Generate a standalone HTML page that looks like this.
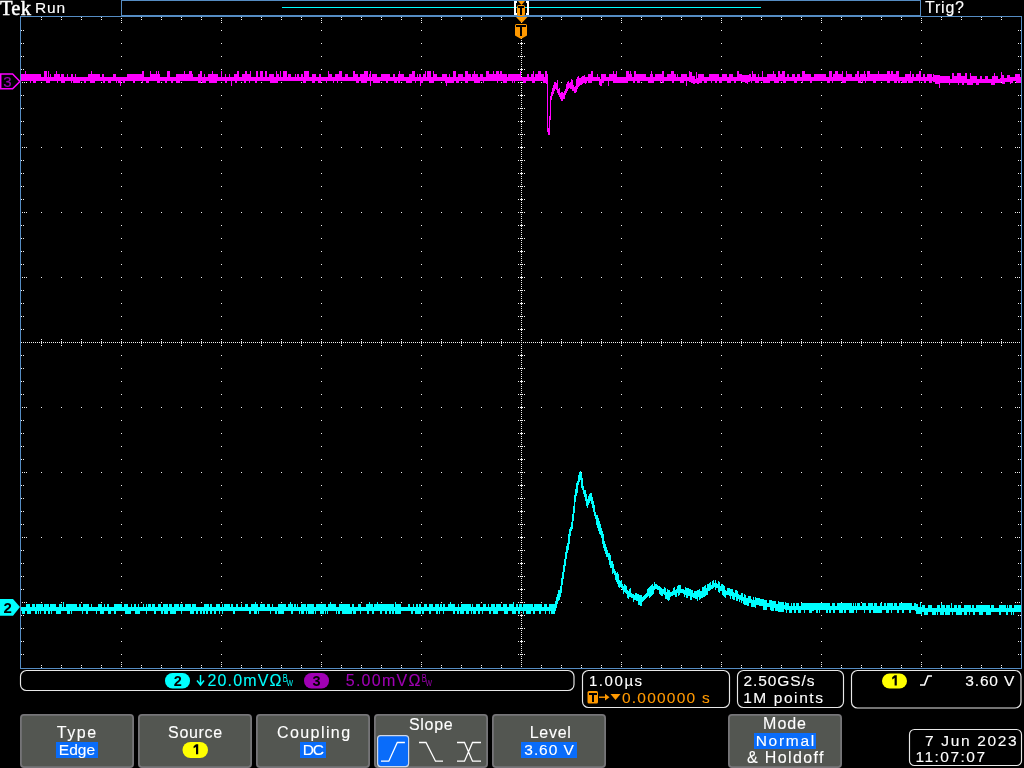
<!DOCTYPE html>
<html><head><meta charset="utf-8"><title>Tek scope</title>
<style>
html,body{margin:0;padding:0;background:#000;width:1024px;height:768px;overflow:hidden}
svg{position:absolute;left:0;top:0;display:block;will-change:transform}
text{font-family:"Liberation Sans",sans-serif}
</style></head><body>
<svg width="1024" height="768" viewBox="0 0 1024 768" shape-rendering="crispEdges">
<rect width="1024" height="768" fill="#000"/>
<path d="M121 0h800v1h-800zM121 15h800v1h-800zM121 0h1v16h-1zM920 0h1v16h-1z" fill="#558cc3"/>
<path d="M282 7h479v1h-479z" fill="#00ffff"/>
<path d="M20 16h1002v1h-1002zM20 668h1002v1h-1002zM20 16h1v653h-1zM1021 16h1v653h-1z" fill="#558cc3"/>
<path d="M121 30h1v1h-1zM121 43h1v1h-1zM121 56h1v1h-1zM121 69h1v1h-1zM121 82h1v1h-1zM121 95h1v1h-1zM121 108h1v1h-1zM121 121h1v1h-1zM121 134h1v1h-1zM121 147h1v1h-1zM121 160h1v1h-1zM121 173h1v1h-1zM121 186h1v1h-1zM121 199h1v1h-1zM121 212h1v1h-1zM121 225h1v1h-1zM121 238h1v1h-1zM121 251h1v1h-1zM121 264h1v1h-1zM121 277h1v1h-1zM121 290h1v1h-1zM121 303h1v1h-1zM121 316h1v1h-1zM121 329h1v1h-1zM121 342h1v1h-1zM121 355h1v1h-1zM121 368h1v1h-1zM121 381h1v1h-1zM121 394h1v1h-1zM121 407h1v1h-1zM121 420h1v1h-1zM121 433h1v1h-1zM121 446h1v1h-1zM121 459h1v1h-1zM121 472h1v1h-1zM121 485h1v1h-1zM121 498h1v1h-1zM121 511h1v1h-1zM121 524h1v1h-1zM121 537h1v1h-1zM121 550h1v1h-1zM121 563h1v1h-1zM121 576h1v1h-1zM121 589h1v1h-1zM121 602h1v1h-1zM121 615h1v1h-1zM121 628h1v1h-1zM121 641h1v1h-1zM121 654h1v1h-1zM221 30h1v1h-1zM221 43h1v1h-1zM221 56h1v1h-1zM221 69h1v1h-1zM221 82h1v1h-1zM221 95h1v1h-1zM221 108h1v1h-1zM221 121h1v1h-1zM221 134h1v1h-1zM221 147h1v1h-1zM221 160h1v1h-1zM221 173h1v1h-1zM221 186h1v1h-1zM221 199h1v1h-1zM221 212h1v1h-1zM221 225h1v1h-1zM221 238h1v1h-1zM221 251h1v1h-1zM221 264h1v1h-1zM221 277h1v1h-1zM221 290h1v1h-1zM221 303h1v1h-1zM221 316h1v1h-1zM221 329h1v1h-1zM221 342h1v1h-1zM221 355h1v1h-1zM221 368h1v1h-1zM221 381h1v1h-1zM221 394h1v1h-1zM221 407h1v1h-1zM221 420h1v1h-1zM221 433h1v1h-1zM221 446h1v1h-1zM221 459h1v1h-1zM221 472h1v1h-1zM221 485h1v1h-1zM221 498h1v1h-1zM221 511h1v1h-1zM221 524h1v1h-1zM221 537h1v1h-1zM221 550h1v1h-1zM221 563h1v1h-1zM221 576h1v1h-1zM221 589h1v1h-1zM221 602h1v1h-1zM221 615h1v1h-1zM221 628h1v1h-1zM221 641h1v1h-1zM221 654h1v1h-1zM321 30h1v1h-1zM321 43h1v1h-1zM321 56h1v1h-1zM321 69h1v1h-1zM321 82h1v1h-1zM321 95h1v1h-1zM321 108h1v1h-1zM321 121h1v1h-1zM321 134h1v1h-1zM321 147h1v1h-1zM321 160h1v1h-1zM321 173h1v1h-1zM321 186h1v1h-1zM321 199h1v1h-1zM321 212h1v1h-1zM321 225h1v1h-1zM321 238h1v1h-1zM321 251h1v1h-1zM321 264h1v1h-1zM321 277h1v1h-1zM321 290h1v1h-1zM321 303h1v1h-1zM321 316h1v1h-1zM321 329h1v1h-1zM321 342h1v1h-1zM321 355h1v1h-1zM321 368h1v1h-1zM321 381h1v1h-1zM321 394h1v1h-1zM321 407h1v1h-1zM321 420h1v1h-1zM321 433h1v1h-1zM321 446h1v1h-1zM321 459h1v1h-1zM321 472h1v1h-1zM321 485h1v1h-1zM321 498h1v1h-1zM321 511h1v1h-1zM321 524h1v1h-1zM321 537h1v1h-1zM321 550h1v1h-1zM321 563h1v1h-1zM321 576h1v1h-1zM321 589h1v1h-1zM321 602h1v1h-1zM321 615h1v1h-1zM321 628h1v1h-1zM321 641h1v1h-1zM321 654h1v1h-1zM421 30h1v1h-1zM421 43h1v1h-1zM421 56h1v1h-1zM421 69h1v1h-1zM421 82h1v1h-1zM421 95h1v1h-1zM421 108h1v1h-1zM421 121h1v1h-1zM421 134h1v1h-1zM421 147h1v1h-1zM421 160h1v1h-1zM421 173h1v1h-1zM421 186h1v1h-1zM421 199h1v1h-1zM421 212h1v1h-1zM421 225h1v1h-1zM421 238h1v1h-1zM421 251h1v1h-1zM421 264h1v1h-1zM421 277h1v1h-1zM421 290h1v1h-1zM421 303h1v1h-1zM421 316h1v1h-1zM421 329h1v1h-1zM421 342h1v1h-1zM421 355h1v1h-1zM421 368h1v1h-1zM421 381h1v1h-1zM421 394h1v1h-1zM421 407h1v1h-1zM421 420h1v1h-1zM421 433h1v1h-1zM421 446h1v1h-1zM421 459h1v1h-1zM421 472h1v1h-1zM421 485h1v1h-1zM421 498h1v1h-1zM421 511h1v1h-1zM421 524h1v1h-1zM421 537h1v1h-1zM421 550h1v1h-1zM421 563h1v1h-1zM421 576h1v1h-1zM421 589h1v1h-1zM421 602h1v1h-1zM421 615h1v1h-1zM421 628h1v1h-1zM421 641h1v1h-1zM421 654h1v1h-1zM621 30h1v1h-1zM621 43h1v1h-1zM621 56h1v1h-1zM621 69h1v1h-1zM621 82h1v1h-1zM621 95h1v1h-1zM621 108h1v1h-1zM621 121h1v1h-1zM621 134h1v1h-1zM621 147h1v1h-1zM621 160h1v1h-1zM621 173h1v1h-1zM621 186h1v1h-1zM621 199h1v1h-1zM621 212h1v1h-1zM621 225h1v1h-1zM621 238h1v1h-1zM621 251h1v1h-1zM621 264h1v1h-1zM621 277h1v1h-1zM621 290h1v1h-1zM621 303h1v1h-1zM621 316h1v1h-1zM621 329h1v1h-1zM621 342h1v1h-1zM621 355h1v1h-1zM621 368h1v1h-1zM621 381h1v1h-1zM621 394h1v1h-1zM621 407h1v1h-1zM621 420h1v1h-1zM621 433h1v1h-1zM621 446h1v1h-1zM621 459h1v1h-1zM621 472h1v1h-1zM621 485h1v1h-1zM621 498h1v1h-1zM621 511h1v1h-1zM621 524h1v1h-1zM621 537h1v1h-1zM621 550h1v1h-1zM621 563h1v1h-1zM621 576h1v1h-1zM621 589h1v1h-1zM621 602h1v1h-1zM621 615h1v1h-1zM621 628h1v1h-1zM621 641h1v1h-1zM621 654h1v1h-1zM721 30h1v1h-1zM721 43h1v1h-1zM721 56h1v1h-1zM721 69h1v1h-1zM721 82h1v1h-1zM721 95h1v1h-1zM721 108h1v1h-1zM721 121h1v1h-1zM721 134h1v1h-1zM721 147h1v1h-1zM721 160h1v1h-1zM721 173h1v1h-1zM721 186h1v1h-1zM721 199h1v1h-1zM721 212h1v1h-1zM721 225h1v1h-1zM721 238h1v1h-1zM721 251h1v1h-1zM721 264h1v1h-1zM721 277h1v1h-1zM721 290h1v1h-1zM721 303h1v1h-1zM721 316h1v1h-1zM721 329h1v1h-1zM721 342h1v1h-1zM721 355h1v1h-1zM721 368h1v1h-1zM721 381h1v1h-1zM721 394h1v1h-1zM721 407h1v1h-1zM721 420h1v1h-1zM721 433h1v1h-1zM721 446h1v1h-1zM721 459h1v1h-1zM721 472h1v1h-1zM721 485h1v1h-1zM721 498h1v1h-1zM721 511h1v1h-1zM721 524h1v1h-1zM721 537h1v1h-1zM721 550h1v1h-1zM721 563h1v1h-1zM721 576h1v1h-1zM721 589h1v1h-1zM721 602h1v1h-1zM721 615h1v1h-1zM721 628h1v1h-1zM721 641h1v1h-1zM721 654h1v1h-1zM821 30h1v1h-1zM821 43h1v1h-1zM821 56h1v1h-1zM821 69h1v1h-1zM821 82h1v1h-1zM821 95h1v1h-1zM821 108h1v1h-1zM821 121h1v1h-1zM821 134h1v1h-1zM821 147h1v1h-1zM821 160h1v1h-1zM821 173h1v1h-1zM821 186h1v1h-1zM821 199h1v1h-1zM821 212h1v1h-1zM821 225h1v1h-1zM821 238h1v1h-1zM821 251h1v1h-1zM821 264h1v1h-1zM821 277h1v1h-1zM821 290h1v1h-1zM821 303h1v1h-1zM821 316h1v1h-1zM821 329h1v1h-1zM821 342h1v1h-1zM821 355h1v1h-1zM821 368h1v1h-1zM821 381h1v1h-1zM821 394h1v1h-1zM821 407h1v1h-1zM821 420h1v1h-1zM821 433h1v1h-1zM821 446h1v1h-1zM821 459h1v1h-1zM821 472h1v1h-1zM821 485h1v1h-1zM821 498h1v1h-1zM821 511h1v1h-1zM821 524h1v1h-1zM821 537h1v1h-1zM821 550h1v1h-1zM821 563h1v1h-1zM821 576h1v1h-1zM821 589h1v1h-1zM821 602h1v1h-1zM821 615h1v1h-1zM821 628h1v1h-1zM821 641h1v1h-1zM821 654h1v1h-1zM921 30h1v1h-1zM921 43h1v1h-1zM921 56h1v1h-1zM921 69h1v1h-1zM921 82h1v1h-1zM921 95h1v1h-1zM921 108h1v1h-1zM921 121h1v1h-1zM921 134h1v1h-1zM921 147h1v1h-1zM921 160h1v1h-1zM921 173h1v1h-1zM921 186h1v1h-1zM921 199h1v1h-1zM921 212h1v1h-1zM921 225h1v1h-1zM921 238h1v1h-1zM921 251h1v1h-1zM921 264h1v1h-1zM921 277h1v1h-1zM921 290h1v1h-1zM921 303h1v1h-1zM921 316h1v1h-1zM921 329h1v1h-1zM921 342h1v1h-1zM921 355h1v1h-1zM921 368h1v1h-1zM921 381h1v1h-1zM921 394h1v1h-1zM921 407h1v1h-1zM921 420h1v1h-1zM921 433h1v1h-1zM921 446h1v1h-1zM921 459h1v1h-1zM921 472h1v1h-1zM921 485h1v1h-1zM921 498h1v1h-1zM921 511h1v1h-1zM921 524h1v1h-1zM921 537h1v1h-1zM921 550h1v1h-1zM921 563h1v1h-1zM921 576h1v1h-1zM921 589h1v1h-1zM921 602h1v1h-1zM921 615h1v1h-1zM921 628h1v1h-1zM921 641h1v1h-1zM921 654h1v1h-1zM41 82h1v1h-1zM61 82h1v1h-1zM81 82h1v1h-1zM101 82h1v1h-1zM121 82h1v1h-1zM141 82h1v1h-1zM161 82h1v1h-1zM181 82h1v1h-1zM201 82h1v1h-1zM221 82h1v1h-1zM241 82h1v1h-1zM261 82h1v1h-1zM281 82h1v1h-1zM301 82h1v1h-1zM321 82h1v1h-1zM341 82h1v1h-1zM361 82h1v1h-1zM381 82h1v1h-1zM401 82h1v1h-1zM421 82h1v1h-1zM441 82h1v1h-1zM461 82h1v1h-1zM481 82h1v1h-1zM501 82h1v1h-1zM521 82h1v1h-1zM541 82h1v1h-1zM561 82h1v1h-1zM581 82h1v1h-1zM601 82h1v1h-1zM621 82h1v1h-1zM641 82h1v1h-1zM661 82h1v1h-1zM681 82h1v1h-1zM701 82h1v1h-1zM721 82h1v1h-1zM741 82h1v1h-1zM761 82h1v1h-1zM781 82h1v1h-1zM801 82h1v1h-1zM821 82h1v1h-1zM841 82h1v1h-1zM861 82h1v1h-1zM881 82h1v1h-1zM901 82h1v1h-1zM921 82h1v1h-1zM941 82h1v1h-1zM961 82h1v1h-1zM981 82h1v1h-1zM1001 82h1v1h-1zM41 147h1v1h-1zM61 147h1v1h-1zM81 147h1v1h-1zM101 147h1v1h-1zM121 147h1v1h-1zM141 147h1v1h-1zM161 147h1v1h-1zM181 147h1v1h-1zM201 147h1v1h-1zM221 147h1v1h-1zM241 147h1v1h-1zM261 147h1v1h-1zM281 147h1v1h-1zM301 147h1v1h-1zM321 147h1v1h-1zM341 147h1v1h-1zM361 147h1v1h-1zM381 147h1v1h-1zM401 147h1v1h-1zM421 147h1v1h-1zM441 147h1v1h-1zM461 147h1v1h-1zM481 147h1v1h-1zM501 147h1v1h-1zM521 147h1v1h-1zM541 147h1v1h-1zM561 147h1v1h-1zM581 147h1v1h-1zM601 147h1v1h-1zM621 147h1v1h-1zM641 147h1v1h-1zM661 147h1v1h-1zM681 147h1v1h-1zM701 147h1v1h-1zM721 147h1v1h-1zM741 147h1v1h-1zM761 147h1v1h-1zM781 147h1v1h-1zM801 147h1v1h-1zM821 147h1v1h-1zM841 147h1v1h-1zM861 147h1v1h-1zM881 147h1v1h-1zM901 147h1v1h-1zM921 147h1v1h-1zM941 147h1v1h-1zM961 147h1v1h-1zM981 147h1v1h-1zM1001 147h1v1h-1zM41 212h1v1h-1zM61 212h1v1h-1zM81 212h1v1h-1zM101 212h1v1h-1zM121 212h1v1h-1zM141 212h1v1h-1zM161 212h1v1h-1zM181 212h1v1h-1zM201 212h1v1h-1zM221 212h1v1h-1zM241 212h1v1h-1zM261 212h1v1h-1zM281 212h1v1h-1zM301 212h1v1h-1zM321 212h1v1h-1zM341 212h1v1h-1zM361 212h1v1h-1zM381 212h1v1h-1zM401 212h1v1h-1zM421 212h1v1h-1zM441 212h1v1h-1zM461 212h1v1h-1zM481 212h1v1h-1zM501 212h1v1h-1zM521 212h1v1h-1zM541 212h1v1h-1zM561 212h1v1h-1zM581 212h1v1h-1zM601 212h1v1h-1zM621 212h1v1h-1zM641 212h1v1h-1zM661 212h1v1h-1zM681 212h1v1h-1zM701 212h1v1h-1zM721 212h1v1h-1zM741 212h1v1h-1zM761 212h1v1h-1zM781 212h1v1h-1zM801 212h1v1h-1zM821 212h1v1h-1zM841 212h1v1h-1zM861 212h1v1h-1zM881 212h1v1h-1zM901 212h1v1h-1zM921 212h1v1h-1zM941 212h1v1h-1zM961 212h1v1h-1zM981 212h1v1h-1zM1001 212h1v1h-1zM41 277h1v1h-1zM61 277h1v1h-1zM81 277h1v1h-1zM101 277h1v1h-1zM121 277h1v1h-1zM141 277h1v1h-1zM161 277h1v1h-1zM181 277h1v1h-1zM201 277h1v1h-1zM221 277h1v1h-1zM241 277h1v1h-1zM261 277h1v1h-1zM281 277h1v1h-1zM301 277h1v1h-1zM321 277h1v1h-1zM341 277h1v1h-1zM361 277h1v1h-1zM381 277h1v1h-1zM401 277h1v1h-1zM421 277h1v1h-1zM441 277h1v1h-1zM461 277h1v1h-1zM481 277h1v1h-1zM501 277h1v1h-1zM521 277h1v1h-1zM541 277h1v1h-1zM561 277h1v1h-1zM581 277h1v1h-1zM601 277h1v1h-1zM621 277h1v1h-1zM641 277h1v1h-1zM661 277h1v1h-1zM681 277h1v1h-1zM701 277h1v1h-1zM721 277h1v1h-1zM741 277h1v1h-1zM761 277h1v1h-1zM781 277h1v1h-1zM801 277h1v1h-1zM821 277h1v1h-1zM841 277h1v1h-1zM861 277h1v1h-1zM881 277h1v1h-1zM901 277h1v1h-1zM921 277h1v1h-1zM941 277h1v1h-1zM961 277h1v1h-1zM981 277h1v1h-1zM1001 277h1v1h-1zM41 407h1v1h-1zM61 407h1v1h-1zM81 407h1v1h-1zM101 407h1v1h-1zM121 407h1v1h-1zM141 407h1v1h-1zM161 407h1v1h-1zM181 407h1v1h-1zM201 407h1v1h-1zM221 407h1v1h-1zM241 407h1v1h-1zM261 407h1v1h-1zM281 407h1v1h-1zM301 407h1v1h-1zM321 407h1v1h-1zM341 407h1v1h-1zM361 407h1v1h-1zM381 407h1v1h-1zM401 407h1v1h-1zM421 407h1v1h-1zM441 407h1v1h-1zM461 407h1v1h-1zM481 407h1v1h-1zM501 407h1v1h-1zM521 407h1v1h-1zM541 407h1v1h-1zM561 407h1v1h-1zM581 407h1v1h-1zM601 407h1v1h-1zM621 407h1v1h-1zM641 407h1v1h-1zM661 407h1v1h-1zM681 407h1v1h-1zM701 407h1v1h-1zM721 407h1v1h-1zM741 407h1v1h-1zM761 407h1v1h-1zM781 407h1v1h-1zM801 407h1v1h-1zM821 407h1v1h-1zM841 407h1v1h-1zM861 407h1v1h-1zM881 407h1v1h-1zM901 407h1v1h-1zM921 407h1v1h-1zM941 407h1v1h-1zM961 407h1v1h-1zM981 407h1v1h-1zM1001 407h1v1h-1zM41 472h1v1h-1zM61 472h1v1h-1zM81 472h1v1h-1zM101 472h1v1h-1zM121 472h1v1h-1zM141 472h1v1h-1zM161 472h1v1h-1zM181 472h1v1h-1zM201 472h1v1h-1zM221 472h1v1h-1zM241 472h1v1h-1zM261 472h1v1h-1zM281 472h1v1h-1zM301 472h1v1h-1zM321 472h1v1h-1zM341 472h1v1h-1zM361 472h1v1h-1zM381 472h1v1h-1zM401 472h1v1h-1zM421 472h1v1h-1zM441 472h1v1h-1zM461 472h1v1h-1zM481 472h1v1h-1zM501 472h1v1h-1zM521 472h1v1h-1zM541 472h1v1h-1zM561 472h1v1h-1zM581 472h1v1h-1zM601 472h1v1h-1zM621 472h1v1h-1zM641 472h1v1h-1zM661 472h1v1h-1zM681 472h1v1h-1zM701 472h1v1h-1zM721 472h1v1h-1zM741 472h1v1h-1zM761 472h1v1h-1zM781 472h1v1h-1zM801 472h1v1h-1zM821 472h1v1h-1zM841 472h1v1h-1zM861 472h1v1h-1zM881 472h1v1h-1zM901 472h1v1h-1zM921 472h1v1h-1zM941 472h1v1h-1zM961 472h1v1h-1zM981 472h1v1h-1zM1001 472h1v1h-1zM41 537h1v1h-1zM61 537h1v1h-1zM81 537h1v1h-1zM101 537h1v1h-1zM121 537h1v1h-1zM141 537h1v1h-1zM161 537h1v1h-1zM181 537h1v1h-1zM201 537h1v1h-1zM221 537h1v1h-1zM241 537h1v1h-1zM261 537h1v1h-1zM281 537h1v1h-1zM301 537h1v1h-1zM321 537h1v1h-1zM341 537h1v1h-1zM361 537h1v1h-1zM381 537h1v1h-1zM401 537h1v1h-1zM421 537h1v1h-1zM441 537h1v1h-1zM461 537h1v1h-1zM481 537h1v1h-1zM501 537h1v1h-1zM521 537h1v1h-1zM541 537h1v1h-1zM561 537h1v1h-1zM581 537h1v1h-1zM601 537h1v1h-1zM621 537h1v1h-1zM641 537h1v1h-1zM661 537h1v1h-1zM681 537h1v1h-1zM701 537h1v1h-1zM721 537h1v1h-1zM741 537h1v1h-1zM761 537h1v1h-1zM781 537h1v1h-1zM801 537h1v1h-1zM821 537h1v1h-1zM841 537h1v1h-1zM861 537h1v1h-1zM881 537h1v1h-1zM901 537h1v1h-1zM921 537h1v1h-1zM941 537h1v1h-1zM961 537h1v1h-1zM981 537h1v1h-1zM1001 537h1v1h-1zM41 602h1v1h-1zM61 602h1v1h-1zM81 602h1v1h-1zM101 602h1v1h-1zM121 602h1v1h-1zM141 602h1v1h-1zM161 602h1v1h-1zM181 602h1v1h-1zM201 602h1v1h-1zM221 602h1v1h-1zM241 602h1v1h-1zM261 602h1v1h-1zM281 602h1v1h-1zM301 602h1v1h-1zM321 602h1v1h-1zM341 602h1v1h-1zM361 602h1v1h-1zM381 602h1v1h-1zM401 602h1v1h-1zM421 602h1v1h-1zM441 602h1v1h-1zM461 602h1v1h-1zM481 602h1v1h-1zM501 602h1v1h-1zM521 602h1v1h-1zM541 602h1v1h-1zM561 602h1v1h-1zM581 602h1v1h-1zM601 602h1v1h-1zM621 602h1v1h-1zM641 602h1v1h-1zM661 602h1v1h-1zM681 602h1v1h-1zM701 602h1v1h-1zM721 602h1v1h-1zM741 602h1v1h-1zM761 602h1v1h-1zM781 602h1v1h-1zM801 602h1v1h-1zM821 602h1v1h-1zM841 602h1v1h-1zM861 602h1v1h-1zM881 602h1v1h-1zM901 602h1v1h-1zM921 602h1v1h-1zM941 602h1v1h-1zM961 602h1v1h-1zM981 602h1v1h-1zM1001 602h1v1h-1zM521 18h1v1h-1zM521 20h1v1h-1zM521 22h1v1h-1zM521 24h1v1h-1zM521 26h1v1h-1zM521 28h1v1h-1zM521 30h1v1h-1zM521 32h1v1h-1zM521 34h1v1h-1zM521 36h1v1h-1zM521 38h1v1h-1zM521 40h1v1h-1zM521 42h1v1h-1zM521 44h1v1h-1zM521 46h1v1h-1zM521 48h1v1h-1zM521 50h1v1h-1zM521 52h1v1h-1zM521 54h1v1h-1zM521 56h1v1h-1zM521 58h1v1h-1zM521 60h1v1h-1zM521 62h1v1h-1zM521 64h1v1h-1zM521 66h1v1h-1zM521 68h1v1h-1zM521 70h1v1h-1zM521 72h1v1h-1zM521 74h1v1h-1zM521 76h1v1h-1zM521 78h1v1h-1zM521 80h1v1h-1zM521 82h1v1h-1zM521 84h1v1h-1zM521 86h1v1h-1zM521 88h1v1h-1zM521 90h1v1h-1zM521 92h1v1h-1zM521 94h1v1h-1zM521 96h1v1h-1zM521 98h1v1h-1zM521 100h1v1h-1zM521 102h1v1h-1zM521 104h1v1h-1zM521 106h1v1h-1zM521 108h1v1h-1zM521 110h1v1h-1zM521 112h1v1h-1zM521 114h1v1h-1zM521 116h1v1h-1zM521 118h1v1h-1zM521 120h1v1h-1zM521 122h1v1h-1zM521 124h1v1h-1zM521 126h1v1h-1zM521 128h1v1h-1zM521 130h1v1h-1zM521 132h1v1h-1zM521 134h1v1h-1zM521 136h1v1h-1zM521 138h1v1h-1zM521 140h1v1h-1zM521 142h1v1h-1zM521 144h1v1h-1zM521 146h1v1h-1zM521 148h1v1h-1zM521 150h1v1h-1zM521 152h1v1h-1zM521 154h1v1h-1zM521 156h1v1h-1zM521 158h1v1h-1zM521 160h1v1h-1zM521 162h1v1h-1zM521 164h1v1h-1zM521 166h1v1h-1zM521 168h1v1h-1zM521 170h1v1h-1zM521 172h1v1h-1zM521 174h1v1h-1zM521 176h1v1h-1zM521 178h1v1h-1zM521 180h1v1h-1zM521 182h1v1h-1zM521 184h1v1h-1zM521 186h1v1h-1zM521 188h1v1h-1zM521 190h1v1h-1zM521 192h1v1h-1zM521 194h1v1h-1zM521 196h1v1h-1zM521 198h1v1h-1zM521 200h1v1h-1zM521 202h1v1h-1zM521 204h1v1h-1zM521 206h1v1h-1zM521 208h1v1h-1zM521 210h1v1h-1zM521 212h1v1h-1zM521 214h1v1h-1zM521 216h1v1h-1zM521 218h1v1h-1zM521 220h1v1h-1zM521 222h1v1h-1zM521 224h1v1h-1zM521 226h1v1h-1zM521 228h1v1h-1zM521 230h1v1h-1zM521 232h1v1h-1zM521 234h1v1h-1zM521 236h1v1h-1zM521 238h1v1h-1zM521 240h1v1h-1zM521 242h1v1h-1zM521 244h1v1h-1zM521 246h1v1h-1zM521 248h1v1h-1zM521 250h1v1h-1zM521 252h1v1h-1zM521 254h1v1h-1zM521 256h1v1h-1zM521 258h1v1h-1zM521 260h1v1h-1zM521 262h1v1h-1zM521 264h1v1h-1zM521 266h1v1h-1zM521 268h1v1h-1zM521 270h1v1h-1zM521 272h1v1h-1zM521 274h1v1h-1zM521 276h1v1h-1zM521 278h1v1h-1zM521 280h1v1h-1zM521 282h1v1h-1zM521 284h1v1h-1zM521 286h1v1h-1zM521 288h1v1h-1zM521 290h1v1h-1zM521 292h1v1h-1zM521 294h1v1h-1zM521 296h1v1h-1zM521 298h1v1h-1zM521 300h1v1h-1zM521 302h1v1h-1zM521 304h1v1h-1zM521 306h1v1h-1zM521 308h1v1h-1zM521 310h1v1h-1zM521 312h1v1h-1zM521 314h1v1h-1zM521 316h1v1h-1zM521 318h1v1h-1zM521 320h1v1h-1zM521 322h1v1h-1zM521 324h1v1h-1zM521 326h1v1h-1zM521 328h1v1h-1zM521 330h1v1h-1zM521 332h1v1h-1zM521 334h1v1h-1zM521 336h1v1h-1zM521 338h1v1h-1zM521 340h1v1h-1zM521 342h1v1h-1zM521 344h1v1h-1zM521 346h1v1h-1zM521 348h1v1h-1zM521 350h1v1h-1zM521 352h1v1h-1zM521 354h1v1h-1zM521 356h1v1h-1zM521 358h1v1h-1zM521 360h1v1h-1zM521 362h1v1h-1zM521 364h1v1h-1zM521 366h1v1h-1zM521 368h1v1h-1zM521 370h1v1h-1zM521 372h1v1h-1zM521 374h1v1h-1zM521 376h1v1h-1zM521 378h1v1h-1zM521 380h1v1h-1zM521 382h1v1h-1zM521 384h1v1h-1zM521 386h1v1h-1zM521 388h1v1h-1zM521 390h1v1h-1zM521 392h1v1h-1zM521 394h1v1h-1zM521 396h1v1h-1zM521 398h1v1h-1zM521 400h1v1h-1zM521 402h1v1h-1zM521 404h1v1h-1zM521 406h1v1h-1zM521 408h1v1h-1zM521 410h1v1h-1zM521 412h1v1h-1zM521 414h1v1h-1zM521 416h1v1h-1zM521 418h1v1h-1zM521 420h1v1h-1zM521 422h1v1h-1zM521 424h1v1h-1zM521 426h1v1h-1zM521 428h1v1h-1zM521 430h1v1h-1zM521 432h1v1h-1zM521 434h1v1h-1zM521 436h1v1h-1zM521 438h1v1h-1zM521 440h1v1h-1zM521 442h1v1h-1zM521 444h1v1h-1zM521 446h1v1h-1zM521 448h1v1h-1zM521 450h1v1h-1zM521 452h1v1h-1zM521 454h1v1h-1zM521 456h1v1h-1zM521 458h1v1h-1zM521 460h1v1h-1zM521 462h1v1h-1zM521 464h1v1h-1zM521 466h1v1h-1zM521 468h1v1h-1zM521 470h1v1h-1zM521 472h1v1h-1zM521 474h1v1h-1zM521 476h1v1h-1zM521 478h1v1h-1zM521 480h1v1h-1zM521 482h1v1h-1zM521 484h1v1h-1zM521 486h1v1h-1zM521 488h1v1h-1zM521 490h1v1h-1zM521 492h1v1h-1zM521 494h1v1h-1zM521 496h1v1h-1zM521 498h1v1h-1zM521 500h1v1h-1zM521 502h1v1h-1zM521 504h1v1h-1zM521 506h1v1h-1zM521 508h1v1h-1zM521 510h1v1h-1zM521 512h1v1h-1zM521 514h1v1h-1zM521 516h1v1h-1zM521 518h1v1h-1zM521 520h1v1h-1zM521 522h1v1h-1zM521 524h1v1h-1zM521 526h1v1h-1zM521 528h1v1h-1zM521 530h1v1h-1zM521 532h1v1h-1zM521 534h1v1h-1zM521 536h1v1h-1zM521 538h1v1h-1zM521 540h1v1h-1zM521 542h1v1h-1zM521 544h1v1h-1zM521 546h1v1h-1zM521 548h1v1h-1zM521 550h1v1h-1zM521 552h1v1h-1zM521 554h1v1h-1zM521 556h1v1h-1zM521 558h1v1h-1zM521 560h1v1h-1zM521 562h1v1h-1zM521 564h1v1h-1zM521 566h1v1h-1zM521 568h1v1h-1zM521 570h1v1h-1zM521 572h1v1h-1zM521 574h1v1h-1zM521 576h1v1h-1zM521 578h1v1h-1zM521 580h1v1h-1zM521 582h1v1h-1zM521 584h1v1h-1zM521 586h1v1h-1zM521 588h1v1h-1zM521 590h1v1h-1zM521 592h1v1h-1zM521 594h1v1h-1zM521 596h1v1h-1zM521 598h1v1h-1zM521 600h1v1h-1zM521 602h1v1h-1zM521 604h1v1h-1zM521 606h1v1h-1zM521 608h1v1h-1zM521 610h1v1h-1zM521 612h1v1h-1zM521 614h1v1h-1zM521 616h1v1h-1zM521 618h1v1h-1zM521 620h1v1h-1zM521 622h1v1h-1zM521 624h1v1h-1zM521 626h1v1h-1zM521 628h1v1h-1zM521 630h1v1h-1zM521 632h1v1h-1zM521 634h1v1h-1zM521 636h1v1h-1zM521 638h1v1h-1zM521 640h1v1h-1zM521 642h1v1h-1zM521 644h1v1h-1zM521 646h1v1h-1zM521 648h1v1h-1zM521 650h1v1h-1zM521 652h1v1h-1zM521 654h1v1h-1zM521 656h1v1h-1zM521 658h1v1h-1zM521 660h1v1h-1zM521 662h1v1h-1zM521 664h1v1h-1zM521 666h1v1h-1zM518 30h1v1h-1zM520 30h1v1h-1zM522 30h1v1h-1zM524 30h1v1h-1zM521 30h1v1h-1zM518 43h1v1h-1zM520 43h1v1h-1zM522 43h1v1h-1zM524 43h1v1h-1zM521 43h1v1h-1zM518 56h1v1h-1zM520 56h1v1h-1zM522 56h1v1h-1zM524 56h1v1h-1zM521 56h1v1h-1zM518 69h1v1h-1zM520 69h1v1h-1zM522 69h1v1h-1zM524 69h1v1h-1zM521 69h1v1h-1zM518 82h1v1h-1zM520 82h1v1h-1zM522 82h1v1h-1zM524 82h1v1h-1zM521 82h1v1h-1zM518 95h1v1h-1zM520 95h1v1h-1zM522 95h1v1h-1zM524 95h1v1h-1zM521 95h1v1h-1zM518 108h1v1h-1zM520 108h1v1h-1zM522 108h1v1h-1zM524 108h1v1h-1zM521 108h1v1h-1zM518 121h1v1h-1zM520 121h1v1h-1zM522 121h1v1h-1zM524 121h1v1h-1zM521 121h1v1h-1zM518 134h1v1h-1zM520 134h1v1h-1zM522 134h1v1h-1zM524 134h1v1h-1zM521 134h1v1h-1zM518 147h1v1h-1zM520 147h1v1h-1zM522 147h1v1h-1zM524 147h1v1h-1zM521 147h1v1h-1zM518 160h1v1h-1zM520 160h1v1h-1zM522 160h1v1h-1zM524 160h1v1h-1zM521 160h1v1h-1zM518 173h1v1h-1zM520 173h1v1h-1zM522 173h1v1h-1zM524 173h1v1h-1zM521 173h1v1h-1zM518 186h1v1h-1zM520 186h1v1h-1zM522 186h1v1h-1zM524 186h1v1h-1zM521 186h1v1h-1zM518 199h1v1h-1zM520 199h1v1h-1zM522 199h1v1h-1zM524 199h1v1h-1zM521 199h1v1h-1zM518 212h1v1h-1zM520 212h1v1h-1zM522 212h1v1h-1zM524 212h1v1h-1zM521 212h1v1h-1zM518 225h1v1h-1zM520 225h1v1h-1zM522 225h1v1h-1zM524 225h1v1h-1zM521 225h1v1h-1zM518 238h1v1h-1zM520 238h1v1h-1zM522 238h1v1h-1zM524 238h1v1h-1zM521 238h1v1h-1zM518 251h1v1h-1zM520 251h1v1h-1zM522 251h1v1h-1zM524 251h1v1h-1zM521 251h1v1h-1zM518 264h1v1h-1zM520 264h1v1h-1zM522 264h1v1h-1zM524 264h1v1h-1zM521 264h1v1h-1zM518 277h1v1h-1zM520 277h1v1h-1zM522 277h1v1h-1zM524 277h1v1h-1zM521 277h1v1h-1zM518 290h1v1h-1zM520 290h1v1h-1zM522 290h1v1h-1zM524 290h1v1h-1zM521 290h1v1h-1zM518 303h1v1h-1zM520 303h1v1h-1zM522 303h1v1h-1zM524 303h1v1h-1zM521 303h1v1h-1zM518 316h1v1h-1zM520 316h1v1h-1zM522 316h1v1h-1zM524 316h1v1h-1zM521 316h1v1h-1zM518 329h1v1h-1zM520 329h1v1h-1zM522 329h1v1h-1zM524 329h1v1h-1zM521 329h1v1h-1zM518 355h1v1h-1zM520 355h1v1h-1zM522 355h1v1h-1zM524 355h1v1h-1zM521 355h1v1h-1zM518 368h1v1h-1zM520 368h1v1h-1zM522 368h1v1h-1zM524 368h1v1h-1zM521 368h1v1h-1zM518 381h1v1h-1zM520 381h1v1h-1zM522 381h1v1h-1zM524 381h1v1h-1zM521 381h1v1h-1zM518 394h1v1h-1zM520 394h1v1h-1zM522 394h1v1h-1zM524 394h1v1h-1zM521 394h1v1h-1zM518 407h1v1h-1zM520 407h1v1h-1zM522 407h1v1h-1zM524 407h1v1h-1zM521 407h1v1h-1zM518 420h1v1h-1zM520 420h1v1h-1zM522 420h1v1h-1zM524 420h1v1h-1zM521 420h1v1h-1zM518 433h1v1h-1zM520 433h1v1h-1zM522 433h1v1h-1zM524 433h1v1h-1zM521 433h1v1h-1zM518 446h1v1h-1zM520 446h1v1h-1zM522 446h1v1h-1zM524 446h1v1h-1zM521 446h1v1h-1zM518 459h1v1h-1zM520 459h1v1h-1zM522 459h1v1h-1zM524 459h1v1h-1zM521 459h1v1h-1zM518 472h1v1h-1zM520 472h1v1h-1zM522 472h1v1h-1zM524 472h1v1h-1zM521 472h1v1h-1zM518 485h1v1h-1zM520 485h1v1h-1zM522 485h1v1h-1zM524 485h1v1h-1zM521 485h1v1h-1zM518 498h1v1h-1zM520 498h1v1h-1zM522 498h1v1h-1zM524 498h1v1h-1zM521 498h1v1h-1zM518 511h1v1h-1zM520 511h1v1h-1zM522 511h1v1h-1zM524 511h1v1h-1zM521 511h1v1h-1zM518 524h1v1h-1zM520 524h1v1h-1zM522 524h1v1h-1zM524 524h1v1h-1zM521 524h1v1h-1zM518 537h1v1h-1zM520 537h1v1h-1zM522 537h1v1h-1zM524 537h1v1h-1zM521 537h1v1h-1zM518 550h1v1h-1zM520 550h1v1h-1zM522 550h1v1h-1zM524 550h1v1h-1zM521 550h1v1h-1zM518 563h1v1h-1zM520 563h1v1h-1zM522 563h1v1h-1zM524 563h1v1h-1zM521 563h1v1h-1zM518 576h1v1h-1zM520 576h1v1h-1zM522 576h1v1h-1zM524 576h1v1h-1zM521 576h1v1h-1zM518 589h1v1h-1zM520 589h1v1h-1zM522 589h1v1h-1zM524 589h1v1h-1zM521 589h1v1h-1zM518 602h1v1h-1zM520 602h1v1h-1zM522 602h1v1h-1zM524 602h1v1h-1zM521 602h1v1h-1zM518 615h1v1h-1zM520 615h1v1h-1zM522 615h1v1h-1zM524 615h1v1h-1zM521 615h1v1h-1zM518 628h1v1h-1zM520 628h1v1h-1zM522 628h1v1h-1zM524 628h1v1h-1zM521 628h1v1h-1zM518 641h1v1h-1zM520 641h1v1h-1zM522 641h1v1h-1zM524 641h1v1h-1zM521 641h1v1h-1zM518 654h1v1h-1zM520 654h1v1h-1zM522 654h1v1h-1zM524 654h1v1h-1zM521 654h1v1h-1zM21 342h1v1h-1zM23 342h1v1h-1zM25 342h1v1h-1zM27 342h1v1h-1zM29 342h1v1h-1zM31 342h1v1h-1zM33 342h1v1h-1zM35 342h1v1h-1zM37 342h1v1h-1zM39 342h1v1h-1zM41 342h1v1h-1zM43 342h1v1h-1zM45 342h1v1h-1zM47 342h1v1h-1zM49 342h1v1h-1zM51 342h1v1h-1zM53 342h1v1h-1zM55 342h1v1h-1zM57 342h1v1h-1zM59 342h1v1h-1zM61 342h1v1h-1zM63 342h1v1h-1zM65 342h1v1h-1zM67 342h1v1h-1zM69 342h1v1h-1zM71 342h1v1h-1zM73 342h1v1h-1zM75 342h1v1h-1zM77 342h1v1h-1zM79 342h1v1h-1zM81 342h1v1h-1zM83 342h1v1h-1zM85 342h1v1h-1zM87 342h1v1h-1zM89 342h1v1h-1zM91 342h1v1h-1zM93 342h1v1h-1zM95 342h1v1h-1zM97 342h1v1h-1zM99 342h1v1h-1zM101 342h1v1h-1zM103 342h1v1h-1zM105 342h1v1h-1zM107 342h1v1h-1zM109 342h1v1h-1zM111 342h1v1h-1zM113 342h1v1h-1zM115 342h1v1h-1zM117 342h1v1h-1zM119 342h1v1h-1zM121 342h1v1h-1zM123 342h1v1h-1zM125 342h1v1h-1zM127 342h1v1h-1zM129 342h1v1h-1zM131 342h1v1h-1zM133 342h1v1h-1zM135 342h1v1h-1zM137 342h1v1h-1zM139 342h1v1h-1zM141 342h1v1h-1zM143 342h1v1h-1zM145 342h1v1h-1zM147 342h1v1h-1zM149 342h1v1h-1zM151 342h1v1h-1zM153 342h1v1h-1zM155 342h1v1h-1zM157 342h1v1h-1zM159 342h1v1h-1zM161 342h1v1h-1zM163 342h1v1h-1zM165 342h1v1h-1zM167 342h1v1h-1zM169 342h1v1h-1zM171 342h1v1h-1zM173 342h1v1h-1zM175 342h1v1h-1zM177 342h1v1h-1zM179 342h1v1h-1zM181 342h1v1h-1zM183 342h1v1h-1zM185 342h1v1h-1zM187 342h1v1h-1zM189 342h1v1h-1zM191 342h1v1h-1zM193 342h1v1h-1zM195 342h1v1h-1zM197 342h1v1h-1zM199 342h1v1h-1zM201 342h1v1h-1zM203 342h1v1h-1zM205 342h1v1h-1zM207 342h1v1h-1zM209 342h1v1h-1zM211 342h1v1h-1zM213 342h1v1h-1zM215 342h1v1h-1zM217 342h1v1h-1zM219 342h1v1h-1zM221 342h1v1h-1zM223 342h1v1h-1zM225 342h1v1h-1zM227 342h1v1h-1zM229 342h1v1h-1zM231 342h1v1h-1zM233 342h1v1h-1zM235 342h1v1h-1zM237 342h1v1h-1zM239 342h1v1h-1zM241 342h1v1h-1zM243 342h1v1h-1zM245 342h1v1h-1zM247 342h1v1h-1zM249 342h1v1h-1zM251 342h1v1h-1zM253 342h1v1h-1zM255 342h1v1h-1zM257 342h1v1h-1zM259 342h1v1h-1zM261 342h1v1h-1zM263 342h1v1h-1zM265 342h1v1h-1zM267 342h1v1h-1zM269 342h1v1h-1zM271 342h1v1h-1zM273 342h1v1h-1zM275 342h1v1h-1zM277 342h1v1h-1zM279 342h1v1h-1zM281 342h1v1h-1zM283 342h1v1h-1zM285 342h1v1h-1zM287 342h1v1h-1zM289 342h1v1h-1zM291 342h1v1h-1zM293 342h1v1h-1zM295 342h1v1h-1zM297 342h1v1h-1zM299 342h1v1h-1zM301 342h1v1h-1zM303 342h1v1h-1zM305 342h1v1h-1zM307 342h1v1h-1zM309 342h1v1h-1zM311 342h1v1h-1zM313 342h1v1h-1zM315 342h1v1h-1zM317 342h1v1h-1zM319 342h1v1h-1zM321 342h1v1h-1zM323 342h1v1h-1zM325 342h1v1h-1zM327 342h1v1h-1zM329 342h1v1h-1zM331 342h1v1h-1zM333 342h1v1h-1zM335 342h1v1h-1zM337 342h1v1h-1zM339 342h1v1h-1zM341 342h1v1h-1zM343 342h1v1h-1zM345 342h1v1h-1zM347 342h1v1h-1zM349 342h1v1h-1zM351 342h1v1h-1zM353 342h1v1h-1zM355 342h1v1h-1zM357 342h1v1h-1zM359 342h1v1h-1zM361 342h1v1h-1zM363 342h1v1h-1zM365 342h1v1h-1zM367 342h1v1h-1zM369 342h1v1h-1zM371 342h1v1h-1zM373 342h1v1h-1zM375 342h1v1h-1zM377 342h1v1h-1zM379 342h1v1h-1zM381 342h1v1h-1zM383 342h1v1h-1zM385 342h1v1h-1zM387 342h1v1h-1zM389 342h1v1h-1zM391 342h1v1h-1zM393 342h1v1h-1zM395 342h1v1h-1zM397 342h1v1h-1zM399 342h1v1h-1zM401 342h1v1h-1zM403 342h1v1h-1zM405 342h1v1h-1zM407 342h1v1h-1zM409 342h1v1h-1zM411 342h1v1h-1zM413 342h1v1h-1zM415 342h1v1h-1zM417 342h1v1h-1zM419 342h1v1h-1zM421 342h1v1h-1zM423 342h1v1h-1zM425 342h1v1h-1zM427 342h1v1h-1zM429 342h1v1h-1zM431 342h1v1h-1zM433 342h1v1h-1zM435 342h1v1h-1zM437 342h1v1h-1zM439 342h1v1h-1zM441 342h1v1h-1zM443 342h1v1h-1zM445 342h1v1h-1zM447 342h1v1h-1zM449 342h1v1h-1zM451 342h1v1h-1zM453 342h1v1h-1zM455 342h1v1h-1zM457 342h1v1h-1zM459 342h1v1h-1zM461 342h1v1h-1zM463 342h1v1h-1zM465 342h1v1h-1zM467 342h1v1h-1zM469 342h1v1h-1zM471 342h1v1h-1zM473 342h1v1h-1zM475 342h1v1h-1zM477 342h1v1h-1zM479 342h1v1h-1zM481 342h1v1h-1zM483 342h1v1h-1zM485 342h1v1h-1zM487 342h1v1h-1zM489 342h1v1h-1zM491 342h1v1h-1zM493 342h1v1h-1zM495 342h1v1h-1zM497 342h1v1h-1zM499 342h1v1h-1zM501 342h1v1h-1zM503 342h1v1h-1zM505 342h1v1h-1zM507 342h1v1h-1zM509 342h1v1h-1zM511 342h1v1h-1zM513 342h1v1h-1zM515 342h1v1h-1zM517 342h1v1h-1zM519 342h1v1h-1zM521 342h1v1h-1zM523 342h1v1h-1zM525 342h1v1h-1zM527 342h1v1h-1zM529 342h1v1h-1zM531 342h1v1h-1zM533 342h1v1h-1zM535 342h1v1h-1zM537 342h1v1h-1zM539 342h1v1h-1zM541 342h1v1h-1zM543 342h1v1h-1zM545 342h1v1h-1zM547 342h1v1h-1zM549 342h1v1h-1zM551 342h1v1h-1zM553 342h1v1h-1zM555 342h1v1h-1zM557 342h1v1h-1zM559 342h1v1h-1zM561 342h1v1h-1zM563 342h1v1h-1zM565 342h1v1h-1zM567 342h1v1h-1zM569 342h1v1h-1zM571 342h1v1h-1zM573 342h1v1h-1zM575 342h1v1h-1zM577 342h1v1h-1zM579 342h1v1h-1zM581 342h1v1h-1zM583 342h1v1h-1zM585 342h1v1h-1zM587 342h1v1h-1zM589 342h1v1h-1zM591 342h1v1h-1zM593 342h1v1h-1zM595 342h1v1h-1zM597 342h1v1h-1zM599 342h1v1h-1zM601 342h1v1h-1zM603 342h1v1h-1zM605 342h1v1h-1zM607 342h1v1h-1zM609 342h1v1h-1zM611 342h1v1h-1zM613 342h1v1h-1zM615 342h1v1h-1zM617 342h1v1h-1zM619 342h1v1h-1zM621 342h1v1h-1zM623 342h1v1h-1zM625 342h1v1h-1zM627 342h1v1h-1zM629 342h1v1h-1zM631 342h1v1h-1zM633 342h1v1h-1zM635 342h1v1h-1zM637 342h1v1h-1zM639 342h1v1h-1zM641 342h1v1h-1zM643 342h1v1h-1zM645 342h1v1h-1zM647 342h1v1h-1zM649 342h1v1h-1zM651 342h1v1h-1zM653 342h1v1h-1zM655 342h1v1h-1zM657 342h1v1h-1zM659 342h1v1h-1zM661 342h1v1h-1zM663 342h1v1h-1zM665 342h1v1h-1zM667 342h1v1h-1zM669 342h1v1h-1zM671 342h1v1h-1zM673 342h1v1h-1zM675 342h1v1h-1zM677 342h1v1h-1zM679 342h1v1h-1zM681 342h1v1h-1zM683 342h1v1h-1zM685 342h1v1h-1zM687 342h1v1h-1zM689 342h1v1h-1zM691 342h1v1h-1zM693 342h1v1h-1zM695 342h1v1h-1zM697 342h1v1h-1zM699 342h1v1h-1zM701 342h1v1h-1zM703 342h1v1h-1zM705 342h1v1h-1zM707 342h1v1h-1zM709 342h1v1h-1zM711 342h1v1h-1zM713 342h1v1h-1zM715 342h1v1h-1zM717 342h1v1h-1zM719 342h1v1h-1zM721 342h1v1h-1zM723 342h1v1h-1zM725 342h1v1h-1zM727 342h1v1h-1zM729 342h1v1h-1zM731 342h1v1h-1zM733 342h1v1h-1zM735 342h1v1h-1zM737 342h1v1h-1zM739 342h1v1h-1zM741 342h1v1h-1zM743 342h1v1h-1zM745 342h1v1h-1zM747 342h1v1h-1zM749 342h1v1h-1zM751 342h1v1h-1zM753 342h1v1h-1zM755 342h1v1h-1zM757 342h1v1h-1zM759 342h1v1h-1zM761 342h1v1h-1zM763 342h1v1h-1zM765 342h1v1h-1zM767 342h1v1h-1zM769 342h1v1h-1zM771 342h1v1h-1zM773 342h1v1h-1zM775 342h1v1h-1zM777 342h1v1h-1zM779 342h1v1h-1zM781 342h1v1h-1zM783 342h1v1h-1zM785 342h1v1h-1zM787 342h1v1h-1zM789 342h1v1h-1zM791 342h1v1h-1zM793 342h1v1h-1zM795 342h1v1h-1zM797 342h1v1h-1zM799 342h1v1h-1zM801 342h1v1h-1zM803 342h1v1h-1zM805 342h1v1h-1zM807 342h1v1h-1zM809 342h1v1h-1zM811 342h1v1h-1zM813 342h1v1h-1zM815 342h1v1h-1zM817 342h1v1h-1zM819 342h1v1h-1zM821 342h1v1h-1zM823 342h1v1h-1zM825 342h1v1h-1zM827 342h1v1h-1zM829 342h1v1h-1zM831 342h1v1h-1zM833 342h1v1h-1zM835 342h1v1h-1zM837 342h1v1h-1zM839 342h1v1h-1zM841 342h1v1h-1zM843 342h1v1h-1zM845 342h1v1h-1zM847 342h1v1h-1zM849 342h1v1h-1zM851 342h1v1h-1zM853 342h1v1h-1zM855 342h1v1h-1zM857 342h1v1h-1zM859 342h1v1h-1zM861 342h1v1h-1zM863 342h1v1h-1zM865 342h1v1h-1zM867 342h1v1h-1zM869 342h1v1h-1zM871 342h1v1h-1zM873 342h1v1h-1zM875 342h1v1h-1zM877 342h1v1h-1zM879 342h1v1h-1zM881 342h1v1h-1zM883 342h1v1h-1zM885 342h1v1h-1zM887 342h1v1h-1zM889 342h1v1h-1zM891 342h1v1h-1zM893 342h1v1h-1zM895 342h1v1h-1zM897 342h1v1h-1zM899 342h1v1h-1zM901 342h1v1h-1zM903 342h1v1h-1zM905 342h1v1h-1zM907 342h1v1h-1zM909 342h1v1h-1zM911 342h1v1h-1zM913 342h1v1h-1zM915 342h1v1h-1zM917 342h1v1h-1zM919 342h1v1h-1zM921 342h1v1h-1zM923 342h1v1h-1zM925 342h1v1h-1zM927 342h1v1h-1zM929 342h1v1h-1zM931 342h1v1h-1zM933 342h1v1h-1zM935 342h1v1h-1zM937 342h1v1h-1zM939 342h1v1h-1zM941 342h1v1h-1zM943 342h1v1h-1zM945 342h1v1h-1zM947 342h1v1h-1zM949 342h1v1h-1zM951 342h1v1h-1zM953 342h1v1h-1zM955 342h1v1h-1zM957 342h1v1h-1zM959 342h1v1h-1zM961 342h1v1h-1zM963 342h1v1h-1zM965 342h1v1h-1zM967 342h1v1h-1zM969 342h1v1h-1zM971 342h1v1h-1zM973 342h1v1h-1zM975 342h1v1h-1zM977 342h1v1h-1zM979 342h1v1h-1zM981 342h1v1h-1zM983 342h1v1h-1zM985 342h1v1h-1zM987 342h1v1h-1zM989 342h1v1h-1zM991 342h1v1h-1zM993 342h1v1h-1zM995 342h1v1h-1zM997 342h1v1h-1zM999 342h1v1h-1zM1001 342h1v1h-1zM1003 342h1v1h-1zM1005 342h1v1h-1zM1007 342h1v1h-1zM1009 342h1v1h-1zM1011 342h1v1h-1zM1013 342h1v1h-1zM1015 342h1v1h-1zM1017 342h1v1h-1zM1019 342h1v1h-1zM41 339h1v1h-1zM41 341h1v1h-1zM41 343h1v1h-1zM41 345h1v1h-1zM41 342h1v1h-1zM61 339h1v1h-1zM61 341h1v1h-1zM61 343h1v1h-1zM61 345h1v1h-1zM61 342h1v1h-1zM81 339h1v1h-1zM81 341h1v1h-1zM81 343h1v1h-1zM81 345h1v1h-1zM81 342h1v1h-1zM101 339h1v1h-1zM101 341h1v1h-1zM101 343h1v1h-1zM101 345h1v1h-1zM101 342h1v1h-1zM121 339h1v1h-1zM121 341h1v1h-1zM121 343h1v1h-1zM121 345h1v1h-1zM121 342h1v1h-1zM141 339h1v1h-1zM141 341h1v1h-1zM141 343h1v1h-1zM141 345h1v1h-1zM141 342h1v1h-1zM161 339h1v1h-1zM161 341h1v1h-1zM161 343h1v1h-1zM161 345h1v1h-1zM161 342h1v1h-1zM181 339h1v1h-1zM181 341h1v1h-1zM181 343h1v1h-1zM181 345h1v1h-1zM181 342h1v1h-1zM201 339h1v1h-1zM201 341h1v1h-1zM201 343h1v1h-1zM201 345h1v1h-1zM201 342h1v1h-1zM221 339h1v1h-1zM221 341h1v1h-1zM221 343h1v1h-1zM221 345h1v1h-1zM221 342h1v1h-1zM241 339h1v1h-1zM241 341h1v1h-1zM241 343h1v1h-1zM241 345h1v1h-1zM241 342h1v1h-1zM261 339h1v1h-1zM261 341h1v1h-1zM261 343h1v1h-1zM261 345h1v1h-1zM261 342h1v1h-1zM281 339h1v1h-1zM281 341h1v1h-1zM281 343h1v1h-1zM281 345h1v1h-1zM281 342h1v1h-1zM301 339h1v1h-1zM301 341h1v1h-1zM301 343h1v1h-1zM301 345h1v1h-1zM301 342h1v1h-1zM321 339h1v1h-1zM321 341h1v1h-1zM321 343h1v1h-1zM321 345h1v1h-1zM321 342h1v1h-1zM341 339h1v1h-1zM341 341h1v1h-1zM341 343h1v1h-1zM341 345h1v1h-1zM341 342h1v1h-1zM361 339h1v1h-1zM361 341h1v1h-1zM361 343h1v1h-1zM361 345h1v1h-1zM361 342h1v1h-1zM381 339h1v1h-1zM381 341h1v1h-1zM381 343h1v1h-1zM381 345h1v1h-1zM381 342h1v1h-1zM401 339h1v1h-1zM401 341h1v1h-1zM401 343h1v1h-1zM401 345h1v1h-1zM401 342h1v1h-1zM421 339h1v1h-1zM421 341h1v1h-1zM421 343h1v1h-1zM421 345h1v1h-1zM421 342h1v1h-1zM441 339h1v1h-1zM441 341h1v1h-1zM441 343h1v1h-1zM441 345h1v1h-1zM441 342h1v1h-1zM461 339h1v1h-1zM461 341h1v1h-1zM461 343h1v1h-1zM461 345h1v1h-1zM461 342h1v1h-1zM481 339h1v1h-1zM481 341h1v1h-1zM481 343h1v1h-1zM481 345h1v1h-1zM481 342h1v1h-1zM501 339h1v1h-1zM501 341h1v1h-1zM501 343h1v1h-1zM501 345h1v1h-1zM501 342h1v1h-1zM541 339h1v1h-1zM541 341h1v1h-1zM541 343h1v1h-1zM541 345h1v1h-1zM541 342h1v1h-1zM561 339h1v1h-1zM561 341h1v1h-1zM561 343h1v1h-1zM561 345h1v1h-1zM561 342h1v1h-1zM581 339h1v1h-1zM581 341h1v1h-1zM581 343h1v1h-1zM581 345h1v1h-1zM581 342h1v1h-1zM601 339h1v1h-1zM601 341h1v1h-1zM601 343h1v1h-1zM601 345h1v1h-1zM601 342h1v1h-1zM621 339h1v1h-1zM621 341h1v1h-1zM621 343h1v1h-1zM621 345h1v1h-1zM621 342h1v1h-1zM641 339h1v1h-1zM641 341h1v1h-1zM641 343h1v1h-1zM641 345h1v1h-1zM641 342h1v1h-1zM661 339h1v1h-1zM661 341h1v1h-1zM661 343h1v1h-1zM661 345h1v1h-1zM661 342h1v1h-1zM681 339h1v1h-1zM681 341h1v1h-1zM681 343h1v1h-1zM681 345h1v1h-1zM681 342h1v1h-1zM701 339h1v1h-1zM701 341h1v1h-1zM701 343h1v1h-1zM701 345h1v1h-1zM701 342h1v1h-1zM721 339h1v1h-1zM721 341h1v1h-1zM721 343h1v1h-1zM721 345h1v1h-1zM721 342h1v1h-1zM741 339h1v1h-1zM741 341h1v1h-1zM741 343h1v1h-1zM741 345h1v1h-1zM741 342h1v1h-1zM761 339h1v1h-1zM761 341h1v1h-1zM761 343h1v1h-1zM761 345h1v1h-1zM761 342h1v1h-1zM781 339h1v1h-1zM781 341h1v1h-1zM781 343h1v1h-1zM781 345h1v1h-1zM781 342h1v1h-1zM801 339h1v1h-1zM801 341h1v1h-1zM801 343h1v1h-1zM801 345h1v1h-1zM801 342h1v1h-1zM821 339h1v1h-1zM821 341h1v1h-1zM821 343h1v1h-1zM821 345h1v1h-1zM821 342h1v1h-1zM841 339h1v1h-1zM841 341h1v1h-1zM841 343h1v1h-1zM841 345h1v1h-1zM841 342h1v1h-1zM861 339h1v1h-1zM861 341h1v1h-1zM861 343h1v1h-1zM861 345h1v1h-1zM861 342h1v1h-1zM881 339h1v1h-1zM881 341h1v1h-1zM881 343h1v1h-1zM881 345h1v1h-1zM881 342h1v1h-1zM901 339h1v1h-1zM901 341h1v1h-1zM901 343h1v1h-1zM901 345h1v1h-1zM901 342h1v1h-1zM921 339h1v1h-1zM921 341h1v1h-1zM921 343h1v1h-1zM921 345h1v1h-1zM921 342h1v1h-1zM941 339h1v1h-1zM941 341h1v1h-1zM941 343h1v1h-1zM941 345h1v1h-1zM941 342h1v1h-1zM961 339h1v1h-1zM961 341h1v1h-1zM961 343h1v1h-1zM961 345h1v1h-1zM961 342h1v1h-1zM981 339h1v1h-1zM981 341h1v1h-1zM981 343h1v1h-1zM981 345h1v1h-1zM981 342h1v1h-1zM1001 339h1v1h-1zM1001 341h1v1h-1zM1001 343h1v1h-1zM1001 345h1v1h-1zM1001 342h1v1h-1zM21 30h1v1h-1zM23 30h1v1h-1zM1018 30h1v1h-1zM1020 30h1v1h-1zM21 43h1v1h-1zM23 43h1v1h-1zM1018 43h1v1h-1zM1020 43h1v1h-1zM21 56h1v1h-1zM23 56h1v1h-1zM1018 56h1v1h-1zM1020 56h1v1h-1zM21 69h1v1h-1zM23 69h1v1h-1zM1018 69h1v1h-1zM1020 69h1v1h-1zM22 82h1v1h-1zM24 82h1v1h-1zM26 82h1v1h-1zM1015 82h1v1h-1zM1017 82h1v1h-1zM1019 82h1v1h-1zM21 95h1v1h-1zM23 95h1v1h-1zM1018 95h1v1h-1zM1020 95h1v1h-1zM21 108h1v1h-1zM23 108h1v1h-1zM1018 108h1v1h-1zM1020 108h1v1h-1zM21 121h1v1h-1zM23 121h1v1h-1zM1018 121h1v1h-1zM1020 121h1v1h-1zM21 134h1v1h-1zM23 134h1v1h-1zM1018 134h1v1h-1zM1020 134h1v1h-1zM22 147h1v1h-1zM24 147h1v1h-1zM26 147h1v1h-1zM1015 147h1v1h-1zM1017 147h1v1h-1zM1019 147h1v1h-1zM21 160h1v1h-1zM23 160h1v1h-1zM1018 160h1v1h-1zM1020 160h1v1h-1zM21 173h1v1h-1zM23 173h1v1h-1zM1018 173h1v1h-1zM1020 173h1v1h-1zM21 186h1v1h-1zM23 186h1v1h-1zM1018 186h1v1h-1zM1020 186h1v1h-1zM21 199h1v1h-1zM23 199h1v1h-1zM1018 199h1v1h-1zM1020 199h1v1h-1zM22 212h1v1h-1zM24 212h1v1h-1zM26 212h1v1h-1zM1015 212h1v1h-1zM1017 212h1v1h-1zM1019 212h1v1h-1zM21 225h1v1h-1zM23 225h1v1h-1zM1018 225h1v1h-1zM1020 225h1v1h-1zM21 238h1v1h-1zM23 238h1v1h-1zM1018 238h1v1h-1zM1020 238h1v1h-1zM21 251h1v1h-1zM23 251h1v1h-1zM1018 251h1v1h-1zM1020 251h1v1h-1zM21 264h1v1h-1zM23 264h1v1h-1zM1018 264h1v1h-1zM1020 264h1v1h-1zM22 277h1v1h-1zM24 277h1v1h-1zM26 277h1v1h-1zM1015 277h1v1h-1zM1017 277h1v1h-1zM1019 277h1v1h-1zM21 290h1v1h-1zM23 290h1v1h-1zM1018 290h1v1h-1zM1020 290h1v1h-1zM21 303h1v1h-1zM23 303h1v1h-1zM1018 303h1v1h-1zM1020 303h1v1h-1zM21 316h1v1h-1zM23 316h1v1h-1zM1018 316h1v1h-1zM1020 316h1v1h-1zM21 329h1v1h-1zM23 329h1v1h-1zM1018 329h1v1h-1zM1020 329h1v1h-1zM21 355h1v1h-1zM23 355h1v1h-1zM1018 355h1v1h-1zM1020 355h1v1h-1zM21 368h1v1h-1zM23 368h1v1h-1zM1018 368h1v1h-1zM1020 368h1v1h-1zM21 381h1v1h-1zM23 381h1v1h-1zM1018 381h1v1h-1zM1020 381h1v1h-1zM21 394h1v1h-1zM23 394h1v1h-1zM1018 394h1v1h-1zM1020 394h1v1h-1zM22 407h1v1h-1zM24 407h1v1h-1zM26 407h1v1h-1zM1015 407h1v1h-1zM1017 407h1v1h-1zM1019 407h1v1h-1zM21 420h1v1h-1zM23 420h1v1h-1zM1018 420h1v1h-1zM1020 420h1v1h-1zM21 433h1v1h-1zM23 433h1v1h-1zM1018 433h1v1h-1zM1020 433h1v1h-1zM21 446h1v1h-1zM23 446h1v1h-1zM1018 446h1v1h-1zM1020 446h1v1h-1zM21 459h1v1h-1zM23 459h1v1h-1zM1018 459h1v1h-1zM1020 459h1v1h-1zM22 472h1v1h-1zM24 472h1v1h-1zM26 472h1v1h-1zM1015 472h1v1h-1zM1017 472h1v1h-1zM1019 472h1v1h-1zM21 485h1v1h-1zM23 485h1v1h-1zM1018 485h1v1h-1zM1020 485h1v1h-1zM21 498h1v1h-1zM23 498h1v1h-1zM1018 498h1v1h-1zM1020 498h1v1h-1zM21 511h1v1h-1zM23 511h1v1h-1zM1018 511h1v1h-1zM1020 511h1v1h-1zM21 524h1v1h-1zM23 524h1v1h-1zM1018 524h1v1h-1zM1020 524h1v1h-1zM22 537h1v1h-1zM24 537h1v1h-1zM26 537h1v1h-1zM1015 537h1v1h-1zM1017 537h1v1h-1zM1019 537h1v1h-1zM21 550h1v1h-1zM23 550h1v1h-1zM1018 550h1v1h-1zM1020 550h1v1h-1zM21 563h1v1h-1zM23 563h1v1h-1zM1018 563h1v1h-1zM1020 563h1v1h-1zM21 576h1v1h-1zM23 576h1v1h-1zM1018 576h1v1h-1zM1020 576h1v1h-1zM21 589h1v1h-1zM23 589h1v1h-1zM1018 589h1v1h-1zM1020 589h1v1h-1zM22 602h1v1h-1zM24 602h1v1h-1zM26 602h1v1h-1zM1015 602h1v1h-1zM1017 602h1v1h-1zM1019 602h1v1h-1zM21 615h1v1h-1zM23 615h1v1h-1zM1018 615h1v1h-1zM1020 615h1v1h-1zM21 628h1v1h-1zM23 628h1v1h-1zM1018 628h1v1h-1zM1020 628h1v1h-1zM21 641h1v1h-1zM23 641h1v1h-1zM1018 641h1v1h-1zM1020 641h1v1h-1zM21 654h1v1h-1zM23 654h1v1h-1zM1018 654h1v1h-1zM1020 654h1v1h-1zM41 17h1v1h-1zM41 19h1v1h-1zM41 665h1v1h-1zM41 667h1v1h-1zM61 17h1v1h-1zM61 19h1v1h-1zM61 665h1v1h-1zM61 667h1v1h-1zM81 17h1v1h-1zM81 19h1v1h-1zM81 665h1v1h-1zM81 667h1v1h-1zM101 17h1v1h-1zM101 19h1v1h-1zM101 665h1v1h-1zM101 667h1v1h-1zM121 18h1v1h-1zM121 20h1v1h-1zM121 22h1v1h-1zM121 662h1v1h-1zM121 664h1v1h-1zM121 666h1v1h-1zM141 17h1v1h-1zM141 19h1v1h-1zM141 665h1v1h-1zM141 667h1v1h-1zM161 17h1v1h-1zM161 19h1v1h-1zM161 665h1v1h-1zM161 667h1v1h-1zM181 17h1v1h-1zM181 19h1v1h-1zM181 665h1v1h-1zM181 667h1v1h-1zM201 17h1v1h-1zM201 19h1v1h-1zM201 665h1v1h-1zM201 667h1v1h-1zM221 18h1v1h-1zM221 20h1v1h-1zM221 22h1v1h-1zM221 662h1v1h-1zM221 664h1v1h-1zM221 666h1v1h-1zM241 17h1v1h-1zM241 19h1v1h-1zM241 665h1v1h-1zM241 667h1v1h-1zM261 17h1v1h-1zM261 19h1v1h-1zM261 665h1v1h-1zM261 667h1v1h-1zM281 17h1v1h-1zM281 19h1v1h-1zM281 665h1v1h-1zM281 667h1v1h-1zM301 17h1v1h-1zM301 19h1v1h-1zM301 665h1v1h-1zM301 667h1v1h-1zM321 18h1v1h-1zM321 20h1v1h-1zM321 22h1v1h-1zM321 662h1v1h-1zM321 664h1v1h-1zM321 666h1v1h-1zM341 17h1v1h-1zM341 19h1v1h-1zM341 665h1v1h-1zM341 667h1v1h-1zM361 17h1v1h-1zM361 19h1v1h-1zM361 665h1v1h-1zM361 667h1v1h-1zM381 17h1v1h-1zM381 19h1v1h-1zM381 665h1v1h-1zM381 667h1v1h-1zM401 17h1v1h-1zM401 19h1v1h-1zM401 665h1v1h-1zM401 667h1v1h-1zM421 18h1v1h-1zM421 20h1v1h-1zM421 22h1v1h-1zM421 662h1v1h-1zM421 664h1v1h-1zM421 666h1v1h-1zM441 17h1v1h-1zM441 19h1v1h-1zM441 665h1v1h-1zM441 667h1v1h-1zM461 17h1v1h-1zM461 19h1v1h-1zM461 665h1v1h-1zM461 667h1v1h-1zM481 17h1v1h-1zM481 19h1v1h-1zM481 665h1v1h-1zM481 667h1v1h-1zM501 17h1v1h-1zM501 19h1v1h-1zM501 665h1v1h-1zM501 667h1v1h-1zM541 17h1v1h-1zM541 19h1v1h-1zM541 665h1v1h-1zM541 667h1v1h-1zM561 17h1v1h-1zM561 19h1v1h-1zM561 665h1v1h-1zM561 667h1v1h-1zM581 17h1v1h-1zM581 19h1v1h-1zM581 665h1v1h-1zM581 667h1v1h-1zM601 17h1v1h-1zM601 19h1v1h-1zM601 665h1v1h-1zM601 667h1v1h-1zM621 18h1v1h-1zM621 20h1v1h-1zM621 22h1v1h-1zM621 662h1v1h-1zM621 664h1v1h-1zM621 666h1v1h-1zM641 17h1v1h-1zM641 19h1v1h-1zM641 665h1v1h-1zM641 667h1v1h-1zM661 17h1v1h-1zM661 19h1v1h-1zM661 665h1v1h-1zM661 667h1v1h-1zM681 17h1v1h-1zM681 19h1v1h-1zM681 665h1v1h-1zM681 667h1v1h-1zM701 17h1v1h-1zM701 19h1v1h-1zM701 665h1v1h-1zM701 667h1v1h-1zM721 18h1v1h-1zM721 20h1v1h-1zM721 22h1v1h-1zM721 662h1v1h-1zM721 664h1v1h-1zM721 666h1v1h-1zM741 17h1v1h-1zM741 19h1v1h-1zM741 665h1v1h-1zM741 667h1v1h-1zM761 17h1v1h-1zM761 19h1v1h-1zM761 665h1v1h-1zM761 667h1v1h-1zM781 17h1v1h-1zM781 19h1v1h-1zM781 665h1v1h-1zM781 667h1v1h-1zM801 17h1v1h-1zM801 19h1v1h-1zM801 665h1v1h-1zM801 667h1v1h-1zM821 18h1v1h-1zM821 20h1v1h-1zM821 22h1v1h-1zM821 662h1v1h-1zM821 664h1v1h-1zM821 666h1v1h-1zM841 17h1v1h-1zM841 19h1v1h-1zM841 665h1v1h-1zM841 667h1v1h-1zM861 17h1v1h-1zM861 19h1v1h-1zM861 665h1v1h-1zM861 667h1v1h-1zM881 17h1v1h-1zM881 19h1v1h-1zM881 665h1v1h-1zM881 667h1v1h-1zM901 17h1v1h-1zM901 19h1v1h-1zM901 665h1v1h-1zM901 667h1v1h-1zM921 18h1v1h-1zM921 20h1v1h-1zM921 22h1v1h-1zM921 662h1v1h-1zM921 664h1v1h-1zM921 666h1v1h-1zM941 17h1v1h-1zM941 19h1v1h-1zM941 665h1v1h-1zM941 667h1v1h-1zM961 17h1v1h-1zM961 19h1v1h-1zM961 665h1v1h-1zM961 667h1v1h-1zM981 17h1v1h-1zM981 19h1v1h-1zM981 665h1v1h-1zM981 667h1v1h-1zM1001 17h1v1h-1zM1001 19h1v1h-1zM1001 665h1v1h-1zM1001 667h1v1h-1z" fill="#f0f0f0"/>
<path d="M21 74h1v7h-1zM22 74h1v7h-1zM23 74h1v7h-1zM24 74h1v7h-1zM25 71h1v10h-1zM26 74h1v7h-1zM27 74h1v7h-1zM28 74h1v7h-1zM29 74h1v7h-1zM30 74h1v9h-1zM31 74h1v7h-1zM32 74h1v7h-1zM33 74h1v9h-1zM34 74h1v9h-1zM35 74h1v9h-1zM36 74h1v7h-1zM37 74h1v7h-1zM38 74h1v7h-1zM39 74h1v7h-1zM40 74h1v7h-1zM41 77h1v4h-1zM42 77h1v4h-1zM43 77h1v4h-1zM44 71h1v10h-1zM45 71h1v10h-1zM46 71h1v12h-1zM47 77h1v6h-1zM48 71h1v12h-1zM49 77h1v6h-1zM50 74h1v7h-1zM51 77h1v4h-1zM52 77h1v4h-1zM53 77h1v4h-1zM54 74h1v7h-1zM55 74h1v7h-1zM56 71h1v10h-1zM57 74h1v9h-1zM58 74h1v7h-1zM59 74h1v7h-1zM60 77h1v4h-1zM61 74h1v9h-1zM62 74h1v9h-1zM63 74h1v9h-1zM64 77h1v6h-1zM65 77h1v4h-1zM66 77h1v4h-1zM67 74h1v7h-1zM68 77h1v4h-1zM69 77h1v4h-1zM70 77h1v4h-1zM71 74h1v9h-1zM72 74h1v7h-1zM73 77h1v6h-1zM74 77h1v6h-1zM75 74h1v9h-1zM76 77h1v6h-1zM77 77h1v6h-1zM78 77h1v6h-1zM79 77h1v6h-1zM80 77h1v4h-1zM81 77h1v4h-1zM82 77h1v4h-1zM83 77h1v4h-1zM84 77h1v6h-1zM85 77h1v6h-1zM86 77h1v4h-1zM87 77h1v4h-1zM88 74h1v7h-1zM89 74h1v7h-1zM90 74h1v9h-1zM91 71h1v12h-1zM92 74h1v9h-1zM93 74h1v9h-1zM94 74h1v9h-1zM95 74h1v7h-1zM96 74h1v7h-1zM97 74h1v7h-1zM98 74h1v7h-1zM99 74h1v7h-1zM100 77h1v4h-1zM101 77h1v4h-1zM102 74h1v7h-1zM103 74h1v9h-1zM104 77h1v6h-1zM105 77h1v4h-1zM106 77h1v4h-1zM107 77h1v4h-1zM108 77h1v6h-1zM109 77h1v6h-1zM110 77h1v6h-1zM111 77h1v4h-1zM112 77h1v4h-1zM113 74h1v7h-1zM114 74h1v7h-1zM115 74h1v7h-1zM116 77h1v6h-1zM117 77h1v4h-1zM118 77h1v6h-1zM119 77h1v6h-1zM120 77h1v9h-1zM121 77h1v4h-1zM122 77h1v4h-1zM123 77h1v6h-1zM124 77h1v6h-1zM125 77h1v4h-1zM126 77h1v4h-1zM127 74h1v7h-1zM128 74h1v7h-1zM129 74h1v7h-1zM130 74h1v7h-1zM131 74h1v7h-1zM132 74h1v7h-1zM133 74h1v9h-1zM134 74h1v9h-1zM135 74h1v7h-1zM136 74h1v7h-1zM137 74h1v7h-1zM138 74h1v7h-1zM139 74h1v7h-1zM140 74h1v7h-1zM141 74h1v7h-1zM142 71h1v12h-1zM143 71h1v10h-1zM144 77h1v4h-1zM145 77h1v4h-1zM146 77h1v6h-1zM147 77h1v6h-1zM148 77h1v6h-1zM149 77h1v4h-1zM150 71h1v10h-1zM151 74h1v7h-1zM152 74h1v7h-1zM153 74h1v7h-1zM154 74h1v7h-1zM155 74h1v7h-1zM156 71h1v10h-1zM157 74h1v9h-1zM158 71h1v12h-1zM159 74h1v9h-1zM160 77h1v4h-1zM161 77h1v4h-1zM162 77h1v4h-1zM163 77h1v4h-1zM164 77h1v4h-1zM165 77h1v6h-1zM166 77h1v6h-1zM167 71h1v10h-1zM168 71h1v10h-1zM169 71h1v10h-1zM170 77h1v4h-1zM171 77h1v6h-1zM172 77h1v6h-1zM173 77h1v4h-1zM174 77h1v4h-1zM175 77h1v4h-1zM176 74h1v9h-1zM177 74h1v9h-1zM178 74h1v9h-1zM179 74h1v9h-1zM180 74h1v7h-1zM181 74h1v7h-1zM182 74h1v7h-1zM183 74h1v7h-1zM184 71h1v10h-1zM185 74h1v7h-1zM186 74h1v7h-1zM187 74h1v7h-1zM188 74h1v7h-1zM189 71h1v10h-1zM190 71h1v10h-1zM191 71h1v10h-1zM192 74h1v7h-1zM193 77h1v4h-1zM194 77h1v4h-1zM195 77h1v4h-1zM196 77h1v4h-1zM197 77h1v4h-1zM198 74h1v9h-1zM199 74h1v9h-1zM200 71h1v12h-1zM201 71h1v10h-1zM202 77h1v6h-1zM203 77h1v6h-1zM204 74h1v9h-1zM205 77h1v6h-1zM206 77h1v4h-1zM207 77h1v4h-1zM208 74h1v7h-1zM209 74h1v9h-1zM210 74h1v9h-1zM211 74h1v9h-1zM212 71h1v12h-1zM213 74h1v9h-1zM214 74h1v9h-1zM215 74h1v9h-1zM216 74h1v9h-1zM217 74h1v7h-1zM218 77h1v4h-1zM219 77h1v4h-1zM220 77h1v4h-1zM221 71h1v10h-1zM222 77h1v4h-1zM223 77h1v4h-1zM224 77h1v4h-1zM225 74h1v9h-1zM226 77h1v6h-1zM227 77h1v4h-1zM228 77h1v4h-1zM229 74h1v7h-1zM230 77h1v4h-1zM231 77h1v9h-1zM232 77h1v4h-1zM233 77h1v4h-1zM234 74h1v7h-1zM235 74h1v9h-1zM236 74h1v9h-1zM237 71h1v10h-1zM238 71h1v10h-1zM239 77h1v4h-1zM240 77h1v4h-1zM241 77h1v4h-1zM242 74h1v7h-1zM243 74h1v7h-1zM244 74h1v9h-1zM245 71h1v12h-1zM246 71h1v10h-1zM247 74h1v7h-1zM248 74h1v7h-1zM249 74h1v9h-1zM250 71h1v10h-1zM251 77h1v4h-1zM252 77h1v4h-1zM253 77h1v4h-1zM254 77h1v4h-1zM255 77h1v6h-1zM256 71h1v12h-1zM257 71h1v10h-1zM258 77h1v4h-1zM259 77h1v4h-1zM260 71h1v10h-1zM261 71h1v10h-1zM262 71h1v10h-1zM263 77h1v4h-1zM264 77h1v4h-1zM265 71h1v10h-1zM266 71h1v10h-1zM267 77h1v4h-1zM268 77h1v4h-1zM269 74h1v7h-1zM270 74h1v9h-1zM271 74h1v9h-1zM272 74h1v9h-1zM273 74h1v9h-1zM274 77h1v6h-1zM275 77h1v6h-1zM276 71h1v12h-1zM277 74h1v9h-1zM278 74h1v7h-1zM279 77h1v4h-1zM280 71h1v10h-1zM281 77h1v4h-1zM282 77h1v4h-1zM283 71h1v10h-1zM284 71h1v10h-1zM285 71h1v10h-1zM286 71h1v10h-1zM287 77h1v4h-1zM288 74h1v7h-1zM289 74h1v7h-1zM290 74h1v7h-1zM291 77h1v4h-1zM292 77h1v4h-1zM293 77h1v4h-1zM294 77h1v4h-1zM295 74h1v7h-1zM296 77h1v4h-1zM297 74h1v7h-1zM298 74h1v7h-1zM299 77h1v4h-1zM300 77h1v4h-1zM301 74h1v7h-1zM302 74h1v7h-1zM303 77h1v6h-1zM304 71h1v12h-1zM305 71h1v12h-1zM306 71h1v10h-1zM307 71h1v10h-1zM308 71h1v10h-1zM309 77h1v4h-1zM310 77h1v4h-1zM311 77h1v4h-1zM312 74h1v9h-1zM313 74h1v9h-1zM314 74h1v9h-1zM315 74h1v7h-1zM316 77h1v4h-1zM317 77h1v4h-1zM318 77h1v6h-1zM319 74h1v9h-1zM320 74h1v9h-1zM321 77h1v4h-1zM322 77h1v4h-1zM323 77h1v4h-1zM324 77h1v4h-1zM325 77h1v4h-1zM326 77h1v6h-1zM327 77h1v4h-1zM328 71h1v10h-1zM329 74h1v7h-1zM330 74h1v7h-1zM331 74h1v7h-1zM332 77h1v4h-1zM333 77h1v6h-1zM334 77h1v4h-1zM335 74h1v7h-1zM336 74h1v7h-1zM337 74h1v9h-1zM338 74h1v7h-1zM339 71h1v10h-1zM340 71h1v10h-1zM341 71h1v10h-1zM342 77h1v4h-1zM343 77h1v4h-1zM344 77h1v4h-1zM345 74h1v7h-1zM346 74h1v7h-1zM347 74h1v7h-1zM348 77h1v4h-1zM349 77h1v4h-1zM350 77h1v4h-1zM351 77h1v4h-1zM352 77h1v4h-1zM353 71h1v10h-1zM354 71h1v10h-1zM355 74h1v7h-1zM356 74h1v9h-1zM357 74h1v9h-1zM358 77h1v6h-1zM359 77h1v4h-1zM360 74h1v7h-1zM361 74h1v9h-1zM362 74h1v9h-1zM363 74h1v9h-1zM364 71h1v12h-1zM365 71h1v12h-1zM366 71h1v12h-1zM367 71h1v10h-1zM368 77h1v4h-1zM369 74h1v7h-1zM370 71h1v15h-1zM371 77h1v4h-1zM372 74h1v7h-1zM373 74h1v9h-1zM374 74h1v9h-1zM375 74h1v9h-1zM376 74h1v9h-1zM377 77h1v6h-1zM378 77h1v6h-1zM379 77h1v6h-1zM380 77h1v4h-1zM381 74h1v7h-1zM382 74h1v7h-1zM383 74h1v7h-1zM384 74h1v7h-1zM385 74h1v7h-1zM386 74h1v9h-1zM387 74h1v9h-1zM388 74h1v7h-1zM389 74h1v7h-1zM390 77h1v4h-1zM391 77h1v4h-1zM392 77h1v4h-1zM393 74h1v7h-1zM394 74h1v9h-1zM395 77h1v6h-1zM396 77h1v6h-1zM397 77h1v4h-1zM398 74h1v9h-1zM399 71h1v12h-1zM400 74h1v7h-1zM401 74h1v7h-1zM402 74h1v7h-1zM403 74h1v7h-1zM404 77h1v4h-1zM405 77h1v4h-1zM406 77h1v6h-1zM407 77h1v6h-1zM408 77h1v6h-1zM409 74h1v9h-1zM410 74h1v9h-1zM411 74h1v9h-1zM412 71h1v10h-1zM413 71h1v10h-1zM414 71h1v10h-1zM415 77h1v6h-1zM416 77h1v4h-1zM417 74h1v7h-1zM418 77h1v4h-1zM419 74h1v7h-1zM420 74h1v12h-1zM421 77h1v6h-1zM422 77h1v6h-1zM423 74h1v7h-1zM424 74h1v7h-1zM425 71h1v10h-1zM426 77h1v4h-1zM427 71h1v10h-1zM428 71h1v10h-1zM429 71h1v12h-1zM430 71h1v12h-1zM431 77h1v6h-1zM432 77h1v6h-1zM433 71h1v12h-1zM434 74h1v7h-1zM435 74h1v7h-1zM436 74h1v7h-1zM437 77h1v4h-1zM438 77h1v4h-1zM439 77h1v4h-1zM440 77h1v4h-1zM441 77h1v4h-1zM442 74h1v7h-1zM443 74h1v7h-1zM444 74h1v7h-1zM445 74h1v9h-1zM446 74h1v12h-1zM447 77h1v6h-1zM448 77h1v6h-1zM449 74h1v9h-1zM450 77h1v6h-1zM451 77h1v6h-1zM452 77h1v6h-1zM453 71h1v12h-1zM454 71h1v10h-1zM455 71h1v10h-1zM456 77h1v6h-1zM457 77h1v6h-1zM458 74h1v9h-1zM459 74h1v7h-1zM460 74h1v7h-1zM461 74h1v7h-1zM462 74h1v7h-1zM463 77h1v4h-1zM464 77h1v4h-1zM465 71h1v12h-1zM466 71h1v12h-1zM467 71h1v12h-1zM468 74h1v7h-1zM469 74h1v7h-1zM470 74h1v7h-1zM471 77h1v4h-1zM472 74h1v7h-1zM473 74h1v7h-1zM474 71h1v12h-1zM475 74h1v9h-1zM476 74h1v9h-1zM477 74h1v9h-1zM478 77h1v6h-1zM479 77h1v6h-1zM480 74h1v7h-1zM481 74h1v7h-1zM482 74h1v7h-1zM483 77h1v6h-1zM484 77h1v4h-1zM485 77h1v4h-1zM486 71h1v10h-1zM487 71h1v10h-1zM488 71h1v10h-1zM489 74h1v7h-1zM490 74h1v7h-1zM491 74h1v7h-1zM492 74h1v7h-1zM493 71h1v10h-1zM494 74h1v7h-1zM495 74h1v7h-1zM496 71h1v10h-1zM497 71h1v12h-1zM498 71h1v10h-1zM499 74h1v7h-1zM500 71h1v10h-1zM501 71h1v10h-1zM502 74h1v7h-1zM503 74h1v9h-1zM504 74h1v9h-1zM505 74h1v9h-1zM506 74h1v9h-1zM507 77h1v4h-1zM508 74h1v7h-1zM509 74h1v7h-1zM510 74h1v7h-1zM511 74h1v7h-1zM512 74h1v9h-1zM513 74h1v7h-1zM514 74h1v9h-1zM515 74h1v7h-1zM516 74h1v7h-1zM517 74h1v7h-1zM518 74h1v7h-1zM519 74h1v7h-1zM520 71h1v10h-1zM521 77h1v4h-1zM522 77h1v4h-1zM523 77h1v6h-1zM524 77h1v6h-1zM525 77h1v6h-1zM526 77h1v4h-1zM527 74h1v7h-1zM528 74h1v7h-1zM529 77h1v4h-1zM530 77h1v4h-1zM531 74h1v7h-1zM532 74h1v9h-1zM533 71h1v12h-1zM534 77h1v6h-1zM535 74h1v7h-1zM536 74h1v7h-1zM537 74h1v7h-1zM538 71h1v10h-1zM539 71h1v10h-1zM540 71h1v10h-1zM541 74h1v7h-1zM542 74h1v7h-1zM543 74h1v9h-1zM544 77h1v6h-1zM545 71h1v12h-1zM546 71h1v13h-1zM547 74h1v58h-1zM548 128h1v7h-1zM549 116h1v19h-1zM550 96h1v24h-1zM551 92h1v8h-1zM552 88h1v8h-1zM553 85h1v9h-1zM554 82h1v9h-1zM555 82h1v7h-1zM556 83h1v7h-1zM557 80h1v13h-1zM558 89h1v6h-1zM559 88h1v9h-1zM560 93h1v6h-1zM561 92h1v9h-1zM562 92h1v9h-1zM563 93h1v6h-1zM564 91h1v8h-1zM565 89h1v6h-1zM566 84h1v9h-1zM567 82h1v9h-1zM568 81h1v8h-1zM569 83h1v5h-1zM570 82h1v7h-1zM571 79h1v10h-1zM572 80h1v11h-1zM573 85h1v6h-1zM574 87h1v6h-1zM575 86h1v7h-1zM576 79h1v13h-1zM577 77h1v12h-1zM578 76h1v11h-1zM579 78h1v8h-1zM580 78h1v7h-1zM581 77h1v8h-1zM582 76h1v8h-1zM583 76h1v7h-1zM584 75h1v8h-1zM585 77h1v7h-1zM586 77h1v6h-1zM587 77h1v4h-1zM588 74h1v9h-1zM589 74h1v9h-1zM590 74h1v9h-1zM591 71h1v12h-1zM592 71h1v10h-1zM593 77h1v4h-1zM594 77h1v4h-1zM595 77h1v4h-1zM596 77h1v4h-1zM597 74h1v7h-1zM598 77h1v4h-1zM599 77h1v8h-1zM600 79h1v7h-1zM601 74h1v12h-1zM602 74h1v9h-1zM603 74h1v9h-1zM604 74h1v7h-1zM605 74h1v7h-1zM606 77h1v4h-1zM607 77h1v4h-1zM608 77h1v9h-1zM609 74h1v7h-1zM610 74h1v7h-1zM611 74h1v7h-1zM612 74h1v7h-1zM613 71h1v12h-1zM614 74h1v9h-1zM615 74h1v9h-1zM616 71h1v12h-1zM617 77h1v6h-1zM618 77h1v6h-1zM619 77h1v6h-1zM620 77h1v6h-1zM621 77h1v6h-1zM622 77h1v6h-1zM623 77h1v6h-1zM624 77h1v6h-1zM625 77h1v6h-1zM626 71h1v12h-1zM627 71h1v12h-1zM628 71h1v10h-1zM629 74h1v7h-1zM630 71h1v10h-1zM631 74h1v7h-1zM632 77h1v4h-1zM633 77h1v6h-1zM634 71h1v12h-1zM635 71h1v10h-1zM636 74h1v7h-1zM637 74h1v9h-1zM638 74h1v9h-1zM639 74h1v9h-1zM640 74h1v7h-1zM641 74h1v7h-1zM642 74h1v7h-1zM643 74h1v7h-1zM644 74h1v7h-1zM645 74h1v7h-1zM646 77h1v4h-1zM647 77h1v4h-1zM648 77h1v6h-1zM649 77h1v6h-1zM650 74h1v9h-1zM651 71h1v12h-1zM652 74h1v9h-1zM653 77h1v6h-1zM654 77h1v4h-1zM655 74h1v7h-1zM656 74h1v7h-1zM657 74h1v7h-1zM658 74h1v7h-1zM659 74h1v7h-1zM660 74h1v9h-1zM661 74h1v7h-1zM662 71h1v12h-1zM663 71h1v12h-1zM664 77h1v4h-1zM665 77h1v4h-1zM666 77h1v4h-1zM667 74h1v7h-1zM668 74h1v7h-1zM669 74h1v7h-1zM670 74h1v7h-1zM671 71h1v10h-1zM672 71h1v12h-1zM673 71h1v12h-1zM674 74h1v7h-1zM675 74h1v7h-1zM676 77h1v4h-1zM677 74h1v7h-1zM678 77h1v4h-1zM679 77h1v4h-1zM680 77h1v6h-1zM681 74h1v9h-1zM682 74h1v9h-1zM683 74h1v9h-1zM684 74h1v7h-1zM685 74h1v7h-1zM686 74h1v12h-1zM687 77h1v4h-1zM688 77h1v4h-1zM689 71h1v11h-1zM690 72h1v10h-1zM691 72h1v11h-1zM692 76h1v7h-1zM693 76h1v8h-1zM694 76h1v8h-1zM695 79h1v4h-1zM696 72h1v11h-1zM697 78h1v6h-1zM698 74h1v10h-1zM699 74h1v9h-1zM700 74h1v9h-1zM701 74h1v9h-1zM702 74h1v7h-1zM703 74h1v7h-1zM704 77h1v6h-1zM705 77h1v6h-1zM706 77h1v6h-1zM707 77h1v4h-1zM708 77h1v4h-1zM709 74h1v7h-1zM710 74h1v7h-1zM711 74h1v9h-1zM712 74h1v7h-1zM713 74h1v7h-1zM714 74h1v7h-1zM715 74h1v9h-1zM716 74h1v9h-1zM717 74h1v7h-1zM718 74h1v7h-1zM719 77h1v6h-1zM720 77h1v6h-1zM721 77h1v6h-1zM722 74h1v7h-1zM723 74h1v7h-1zM724 74h1v7h-1zM725 74h1v7h-1zM726 74h1v7h-1zM727 77h1v6h-1zM728 77h1v6h-1zM729 74h1v9h-1zM730 74h1v9h-1zM731 74h1v7h-1zM732 74h1v7h-1zM733 77h1v4h-1zM734 77h1v6h-1zM735 77h1v6h-1zM736 77h1v4h-1zM737 71h1v10h-1zM738 71h1v10h-1zM739 74h1v7h-1zM740 74h1v7h-1zM741 74h1v8h-1zM742 75h1v7h-1zM743 75h1v7h-1zM744 75h1v7h-1zM745 75h1v8h-1zM746 75h1v8h-1zM747 75h1v9h-1zM748 75h1v7h-1zM749 74h1v8h-1zM750 74h1v7h-1zM751 77h1v6h-1zM752 71h1v10h-1zM753 74h1v7h-1zM754 74h1v7h-1zM755 74h1v9h-1zM756 77h1v6h-1zM757 77h1v6h-1zM758 74h1v9h-1zM759 77h1v4h-1zM760 77h1v4h-1zM761 77h1v4h-1zM762 71h1v10h-1zM763 77h1v6h-1zM764 77h1v6h-1zM765 77h1v6h-1zM766 77h1v6h-1zM767 74h1v9h-1zM768 74h1v9h-1zM769 74h1v9h-1zM770 74h1v7h-1zM771 74h1v7h-1zM772 74h1v7h-1zM773 71h1v10h-1zM774 74h1v9h-1zM775 74h1v9h-1zM776 77h1v6h-1zM777 77h1v6h-1zM778 71h1v12h-1zM779 71h1v10h-1zM780 74h1v7h-1zM781 74h1v7h-1zM782 71h1v10h-1zM783 71h1v12h-1zM784 71h1v12h-1zM785 77h1v6h-1zM786 77h1v4h-1zM787 74h1v7h-1zM788 74h1v7h-1zM789 77h1v4h-1zM790 77h1v4h-1zM791 77h1v4h-1zM792 74h1v7h-1zM793 74h1v7h-1zM794 74h1v9h-1zM795 77h1v6h-1zM796 77h1v6h-1zM797 74h1v7h-1zM798 74h1v7h-1zM799 74h1v7h-1zM800 77h1v4h-1zM801 77h1v4h-1zM802 71h1v12h-1zM803 71h1v10h-1zM804 71h1v10h-1zM805 74h1v7h-1zM806 74h1v7h-1zM807 74h1v7h-1zM808 74h1v7h-1zM809 74h1v7h-1zM810 74h1v9h-1zM811 77h1v6h-1zM812 77h1v4h-1zM813 77h1v4h-1zM814 74h1v7h-1zM815 74h1v7h-1zM816 74h1v7h-1zM817 74h1v7h-1zM818 74h1v7h-1zM819 74h1v7h-1zM820 74h1v7h-1zM821 74h1v7h-1zM822 74h1v7h-1zM823 74h1v7h-1zM824 74h1v7h-1zM825 74h1v7h-1zM826 77h1v4h-1zM827 77h1v6h-1zM828 77h1v6h-1zM829 71h1v12h-1zM830 71h1v10h-1zM831 71h1v10h-1zM832 77h1v6h-1zM833 74h1v7h-1zM834 74h1v7h-1zM835 71h1v10h-1zM836 71h1v10h-1zM837 71h1v10h-1zM838 74h1v7h-1zM839 74h1v7h-1zM840 74h1v7h-1zM841 74h1v7h-1zM842 71h1v12h-1zM843 77h1v6h-1zM844 77h1v6h-1zM845 77h1v6h-1zM846 71h1v10h-1zM847 74h1v7h-1zM848 74h1v7h-1zM849 74h1v7h-1zM850 74h1v7h-1zM851 74h1v7h-1zM852 77h1v4h-1zM853 77h1v4h-1zM854 77h1v4h-1zM855 74h1v7h-1zM856 74h1v7h-1zM857 71h1v10h-1zM858 71h1v12h-1zM859 77h1v6h-1zM860 74h1v9h-1zM861 74h1v7h-1zM862 74h1v9h-1zM863 74h1v7h-1zM864 71h1v10h-1zM865 74h1v9h-1zM866 77h1v4h-1zM867 71h1v10h-1zM868 71h1v10h-1zM869 71h1v10h-1zM870 74h1v7h-1zM871 74h1v7h-1zM872 74h1v7h-1zM873 74h1v9h-1zM874 74h1v9h-1zM875 74h1v9h-1zM876 74h1v7h-1zM877 74h1v7h-1zM878 71h1v10h-1zM879 74h1v7h-1zM880 74h1v7h-1zM881 74h1v7h-1zM882 74h1v7h-1zM883 74h1v7h-1zM884 74h1v7h-1zM885 74h1v7h-1zM886 74h1v7h-1zM887 71h1v12h-1zM888 71h1v12h-1zM889 71h1v12h-1zM890 74h1v7h-1zM891 71h1v10h-1zM892 71h1v10h-1zM893 74h1v7h-1zM894 74h1v9h-1zM895 74h1v9h-1zM896 71h1v12h-1zM897 71h1v10h-1zM898 71h1v12h-1zM899 77h1v6h-1zM900 77h1v4h-1zM901 77h1v4h-1zM902 77h1v6h-1zM903 77h1v6h-1zM904 77h1v6h-1zM905 74h1v9h-1zM906 74h1v9h-1zM907 74h1v7h-1zM908 74h1v9h-1zM909 74h1v9h-1zM910 71h1v12h-1zM911 77h1v6h-1zM912 74h1v9h-1zM913 74h1v7h-1zM914 77h1v4h-1zM915 77h1v4h-1zM916 74h1v7h-1zM917 74h1v7h-1zM918 74h1v7h-1zM919 71h1v12h-1zM920 71h1v10h-1zM921 77h1v4h-1zM922 77h1v4h-1zM923 74h1v7h-1zM924 74h1v9h-1zM925 77h1v6h-1zM926 77h1v4h-1zM927 74h1v7h-1zM928 74h1v7h-1zM929 74h1v9h-1zM930 74h1v9h-1zM931 74h1v9h-1zM932 77h1v4h-1zM933 74h1v8h-1zM934 75h1v7h-1zM935 75h1v9h-1zM936 75h1v9h-1zM937 75h1v9h-1zM938 75h1v9h-1zM939 75h1v13h-1zM940 76h1v7h-1zM941 76h1v7h-1zM942 76h1v7h-1zM943 76h1v7h-1zM944 76h1v7h-1zM945 76h1v7h-1zM946 76h1v7h-1zM947 76h1v7h-1zM948 76h1v7h-1zM949 76h1v9h-1zM950 79h1v4h-1zM951 79h1v4h-1zM952 73h1v10h-1zM953 73h1v10h-1zM954 76h1v7h-1zM955 76h1v7h-1zM956 76h1v7h-1zM957 73h1v10h-1zM958 73h1v12h-1zM959 73h1v10h-1zM960 73h1v10h-1zM961 76h1v7h-1zM962 76h1v9h-1zM963 76h1v9h-1zM964 76h1v7h-1zM965 73h1v10h-1zM966 73h1v10h-1zM967 79h1v6h-1zM968 79h1v6h-1zM969 79h1v6h-1zM970 73h1v12h-1zM971 76h1v9h-1zM972 76h1v9h-1zM973 76h1v7h-1zM974 76h1v7h-1zM975 76h1v7h-1zM976 76h1v9h-1zM977 79h1v6h-1zM978 79h1v6h-1zM979 79h1v4h-1zM980 76h1v7h-1zM981 76h1v7h-1zM982 79h1v4h-1zM983 79h1v4h-1zM984 79h1v4h-1zM985 76h1v7h-1zM986 76h1v7h-1zM987 76h1v7h-1zM988 79h1v4h-1zM989 79h1v4h-1zM990 79h1v4h-1zM991 79h1v6h-1zM992 76h1v9h-1zM993 76h1v9h-1zM994 73h1v12h-1zM995 76h1v7h-1zM996 76h1v7h-1zM997 76h1v7h-1zM998 79h1v4h-1zM999 79h1v4h-1zM1000 78h1v5h-1zM1001 72h1v10h-1zM1002 75h1v9h-1zM1003 75h1v9h-1zM1004 78h1v6h-1zM1005 78h1v4h-1zM1006 78h1v4h-1zM1007 75h1v7h-1zM1008 75h1v7h-1zM1009 75h1v7h-1zM1010 77h1v7h-1zM1011 77h1v6h-1zM1012 77h1v6h-1zM1013 77h1v4h-1zM1014 77h1v4h-1zM1015 74h1v7h-1zM1016 74h1v9h-1zM1017 74h1v9h-1zM1018 74h1v9h-1zM1019 74h1v9h-1zM1020 77h1v6h-1z" fill="#ff00ff"/>
<path d="M21 607h1v4h-1zM22 607h1v7h-1zM23 607h1v7h-1zM24 607h1v7h-1zM25 607h1v4h-1zM26 604h1v7h-1zM27 604h1v10h-1zM28 604h1v10h-1zM29 604h1v10h-1zM30 607h1v7h-1zM31 607h1v4h-1zM32 604h1v7h-1zM33 604h1v7h-1zM34 604h1v7h-1zM35 607h1v7h-1zM36 604h1v10h-1zM37 604h1v7h-1zM38 604h1v10h-1zM39 604h1v7h-1zM40 604h1v10h-1zM41 604h1v7h-1zM42 604h1v7h-1zM43 607h1v4h-1zM44 604h1v10h-1zM45 604h1v10h-1zM46 604h1v7h-1zM47 604h1v7h-1zM48 604h1v10h-1zM49 607h1v7h-1zM50 604h1v7h-1zM51 604h1v10h-1zM52 604h1v7h-1zM53 604h1v7h-1zM54 604h1v7h-1zM55 604h1v7h-1zM56 607h1v7h-1zM57 607h1v7h-1zM58 607h1v7h-1zM59 604h1v10h-1zM60 604h1v10h-1zM61 604h1v7h-1zM62 607h1v4h-1zM63 602h1v9h-1zM64 607h1v4h-1zM65 607h1v4h-1zM66 604h1v7h-1zM67 604h1v10h-1zM68 604h1v10h-1zM69 604h1v10h-1zM70 604h1v7h-1zM71 604h1v10h-1zM72 604h1v7h-1zM73 604h1v7h-1zM74 604h1v7h-1zM75 604h1v7h-1zM76 604h1v7h-1zM77 607h1v4h-1zM78 607h1v4h-1zM79 604h1v7h-1zM80 604h1v7h-1zM81 607h1v4h-1zM82 607h1v7h-1zM83 604h1v7h-1zM84 604h1v7h-1zM85 604h1v7h-1zM86 604h1v10h-1zM87 604h1v10h-1zM88 604h1v7h-1zM89 607h1v4h-1zM90 607h1v4h-1zM91 604h1v7h-1zM92 607h1v4h-1zM93 607h1v4h-1zM94 607h1v4h-1zM95 607h1v4h-1zM96 607h1v7h-1zM97 607h1v4h-1zM98 604h1v7h-1zM99 604h1v7h-1zM100 604h1v10h-1zM101 604h1v10h-1zM102 607h1v7h-1zM103 607h1v7h-1zM104 604h1v7h-1zM105 607h1v4h-1zM106 607h1v4h-1zM107 604h1v7h-1zM108 604h1v10h-1zM109 607h1v7h-1zM110 607h1v7h-1zM111 607h1v4h-1zM112 607h1v4h-1zM113 607h1v4h-1zM114 604h1v10h-1zM115 604h1v10h-1zM116 604h1v7h-1zM117 604h1v7h-1zM118 604h1v7h-1zM119 604h1v7h-1zM120 604h1v7h-1zM121 604h1v7h-1zM122 607h1v4h-1zM123 607h1v4h-1zM124 604h1v7h-1zM125 604h1v10h-1zM126 604h1v10h-1zM127 604h1v10h-1zM128 607h1v7h-1zM129 607h1v7h-1zM130 607h1v7h-1zM131 604h1v7h-1zM132 607h1v4h-1zM133 607h1v4h-1zM134 604h1v7h-1zM135 604h1v10h-1zM136 607h1v7h-1zM137 607h1v7h-1zM138 604h1v10h-1zM139 607h1v7h-1zM140 607h1v4h-1zM141 607h1v4h-1zM142 607h1v4h-1zM143 604h1v7h-1zM144 607h1v4h-1zM145 607h1v4h-1zM146 604h1v10h-1zM147 607h1v4h-1zM148 604h1v7h-1zM149 604h1v7h-1zM150 604h1v7h-1zM151 607h1v4h-1zM152 604h1v7h-1zM153 604h1v7h-1zM154 604h1v10h-1zM155 607h1v7h-1zM156 607h1v4h-1zM157 607h1v4h-1zM158 604h1v7h-1zM159 604h1v7h-1zM160 604h1v7h-1zM161 607h1v7h-1zM162 607h1v7h-1zM163 604h1v7h-1zM164 604h1v10h-1zM165 604h1v10h-1zM166 604h1v10h-1zM167 604h1v10h-1zM168 607h1v4h-1zM169 604h1v7h-1zM170 604h1v10h-1zM171 604h1v10h-1zM172 607h1v7h-1zM173 607h1v7h-1zM174 604h1v10h-1zM175 604h1v10h-1zM176 604h1v7h-1zM177 604h1v7h-1zM178 604h1v7h-1zM179 607h1v4h-1zM180 604h1v7h-1zM181 604h1v10h-1zM182 604h1v7h-1zM183 607h1v4h-1zM184 607h1v4h-1zM185 604h1v7h-1zM186 604h1v7h-1zM187 604h1v7h-1zM188 604h1v7h-1zM189 604h1v7h-1zM190 604h1v10h-1zM191 607h1v7h-1zM192 604h1v10h-1zM193 604h1v10h-1zM194 604h1v7h-1zM195 604h1v7h-1zM196 607h1v7h-1zM197 607h1v7h-1zM198 607h1v4h-1zM199 607h1v4h-1zM200 607h1v7h-1zM201 607h1v7h-1zM202 607h1v4h-1zM203 607h1v7h-1zM204 604h1v10h-1zM205 604h1v7h-1zM206 604h1v10h-1zM207 604h1v10h-1zM208 604h1v7h-1zM209 607h1v4h-1zM210 604h1v10h-1zM211 604h1v10h-1zM212 607h1v4h-1zM213 607h1v4h-1zM214 607h1v7h-1zM215 607h1v7h-1zM216 604h1v7h-1zM217 604h1v7h-1zM218 604h1v7h-1zM219 604h1v10h-1zM220 607h1v4h-1zM221 607h1v4h-1zM222 604h1v10h-1zM223 607h1v4h-1zM224 604h1v7h-1zM225 604h1v7h-1zM226 604h1v7h-1zM227 604h1v7h-1zM228 604h1v7h-1zM229 604h1v7h-1zM230 607h1v4h-1zM231 604h1v7h-1zM232 604h1v7h-1zM233 607h1v7h-1zM234 607h1v7h-1zM235 607h1v4h-1zM236 604h1v7h-1zM237 604h1v7h-1zM238 607h1v4h-1zM239 607h1v4h-1zM240 607h1v4h-1zM241 604h1v7h-1zM242 607h1v4h-1zM243 607h1v4h-1zM244 607h1v4h-1zM245 604h1v7h-1zM246 604h1v7h-1zM247 604h1v7h-1zM248 607h1v4h-1zM249 607h1v7h-1zM250 607h1v7h-1zM251 604h1v7h-1zM252 604h1v7h-1zM253 604h1v7h-1zM254 604h1v10h-1zM255 602h1v12h-1zM256 604h1v10h-1zM257 604h1v7h-1zM258 607h1v7h-1zM259 607h1v4h-1zM260 604h1v7h-1zM261 604h1v7h-1zM262 604h1v7h-1zM263 604h1v7h-1zM264 604h1v7h-1zM265 607h1v4h-1zM266 607h1v4h-1zM267 604h1v7h-1zM268 604h1v7h-1zM269 604h1v7h-1zM270 607h1v7h-1zM271 607h1v4h-1zM272 604h1v7h-1zM273 607h1v4h-1zM274 607h1v4h-1zM275 607h1v7h-1zM276 607h1v7h-1zM277 607h1v4h-1zM278 604h1v10h-1zM279 604h1v10h-1zM280 604h1v10h-1zM281 604h1v10h-1zM282 604h1v10h-1zM283 604h1v10h-1zM284 604h1v7h-1zM285 604h1v7h-1zM286 607h1v4h-1zM287 607h1v4h-1zM288 604h1v7h-1zM289 604h1v7h-1zM290 602h1v9h-1zM291 604h1v10h-1zM292 604h1v10h-1zM293 607h1v4h-1zM294 604h1v7h-1zM295 604h1v7h-1zM296 607h1v4h-1zM297 604h1v7h-1zM298 607h1v4h-1zM299 607h1v7h-1zM300 607h1v4h-1zM301 604h1v10h-1zM302 604h1v10h-1zM303 604h1v10h-1zM304 604h1v7h-1zM305 604h1v7h-1zM306 607h1v7h-1zM307 604h1v7h-1zM308 604h1v10h-1zM309 604h1v10h-1zM310 604h1v10h-1zM311 604h1v10h-1zM312 604h1v10h-1zM313 604h1v10h-1zM314 607h1v4h-1zM315 607h1v7h-1zM316 604h1v7h-1zM317 604h1v7h-1zM318 604h1v7h-1zM319 604h1v7h-1zM320 604h1v10h-1zM321 604h1v10h-1zM322 604h1v10h-1zM323 604h1v10h-1zM324 604h1v7h-1zM325 604h1v10h-1zM326 607h1v4h-1zM327 607h1v7h-1zM328 604h1v7h-1zM329 604h1v7h-1zM330 602h1v9h-1zM331 604h1v7h-1zM332 604h1v7h-1zM333 604h1v7h-1zM334 604h1v7h-1zM335 604h1v7h-1zM336 607h1v7h-1zM337 607h1v4h-1zM338 607h1v7h-1zM339 604h1v10h-1zM340 604h1v7h-1zM341 604h1v7h-1zM342 604h1v10h-1zM343 604h1v10h-1zM344 604h1v10h-1zM345 604h1v10h-1zM346 604h1v10h-1zM347 604h1v10h-1zM348 604h1v10h-1zM349 604h1v10h-1zM350 607h1v7h-1zM351 607h1v7h-1zM352 604h1v7h-1zM353 604h1v10h-1zM354 607h1v7h-1zM355 607h1v7h-1zM356 607h1v4h-1zM357 607h1v4h-1zM358 604h1v7h-1zM359 604h1v7h-1zM360 604h1v10h-1zM361 607h1v4h-1zM362 607h1v4h-1zM363 607h1v4h-1zM364 607h1v4h-1zM365 607h1v4h-1zM366 604h1v7h-1zM367 604h1v10h-1zM368 604h1v10h-1zM369 602h1v9h-1zM370 604h1v7h-1zM371 604h1v7h-1zM372 604h1v10h-1zM373 607h1v7h-1zM374 604h1v7h-1zM375 604h1v7h-1zM376 604h1v7h-1zM377 602h1v9h-1zM378 604h1v7h-1zM379 604h1v7h-1zM380 604h1v10h-1zM381 604h1v10h-1zM382 604h1v7h-1zM383 604h1v7h-1zM384 604h1v7h-1zM385 604h1v10h-1zM386 604h1v10h-1zM387 604h1v7h-1zM388 604h1v7h-1zM389 604h1v10h-1zM390 604h1v10h-1zM391 604h1v7h-1zM392 604h1v10h-1zM393 604h1v10h-1zM394 607h1v4h-1zM395 602h1v12h-1zM396 604h1v10h-1zM397 604h1v10h-1zM398 604h1v10h-1zM399 604h1v10h-1zM400 604h1v10h-1zM401 607h1v4h-1zM402 607h1v4h-1zM403 607h1v4h-1zM404 607h1v4h-1zM405 607h1v4h-1zM406 607h1v4h-1zM407 607h1v4h-1zM408 604h1v7h-1zM409 604h1v7h-1zM410 607h1v4h-1zM411 607h1v7h-1zM412 607h1v7h-1zM413 604h1v7h-1zM414 607h1v4h-1zM415 607h1v7h-1zM416 604h1v10h-1zM417 604h1v10h-1zM418 607h1v7h-1zM419 604h1v10h-1zM420 604h1v10h-1zM421 607h1v4h-1zM422 607h1v7h-1zM423 607h1v7h-1zM424 604h1v7h-1zM425 604h1v7h-1zM426 604h1v7h-1zM427 607h1v4h-1zM428 607h1v4h-1zM429 604h1v10h-1zM430 604h1v10h-1zM431 604h1v7h-1zM432 604h1v7h-1zM433 607h1v4h-1zM434 607h1v4h-1zM435 604h1v7h-1zM436 604h1v10h-1zM437 604h1v10h-1zM438 604h1v7h-1zM439 607h1v7h-1zM440 604h1v7h-1zM441 604h1v7h-1zM442 607h1v4h-1zM443 604h1v10h-1zM444 604h1v7h-1zM445 607h1v4h-1zM446 607h1v4h-1zM447 607h1v4h-1zM448 604h1v7h-1zM449 604h1v7h-1zM450 602h1v9h-1zM451 604h1v7h-1zM452 604h1v7h-1zM453 604h1v10h-1zM454 604h1v10h-1zM455 607h1v4h-1zM456 607h1v4h-1zM457 607h1v7h-1zM458 604h1v10h-1zM459 607h1v4h-1zM460 607h1v7h-1zM461 604h1v10h-1zM462 604h1v10h-1zM463 604h1v10h-1zM464 604h1v7h-1zM465 604h1v7h-1zM466 604h1v10h-1zM467 604h1v10h-1zM468 604h1v10h-1zM469 604h1v7h-1zM470 604h1v7h-1zM471 607h1v7h-1zM472 604h1v7h-1zM473 607h1v7h-1zM474 607h1v7h-1zM475 607h1v7h-1zM476 604h1v7h-1zM477 604h1v7h-1zM478 604h1v10h-1zM479 604h1v10h-1zM480 607h1v4h-1zM481 607h1v4h-1zM482 607h1v7h-1zM483 604h1v7h-1zM484 604h1v7h-1zM485 604h1v7h-1zM486 607h1v4h-1zM487 607h1v4h-1zM488 604h1v7h-1zM489 607h1v7h-1zM490 607h1v7h-1zM491 604h1v7h-1zM492 604h1v7h-1zM493 604h1v10h-1zM494 604h1v10h-1zM495 607h1v7h-1zM496 604h1v10h-1zM497 604h1v10h-1zM498 604h1v7h-1zM499 604h1v7h-1zM500 604h1v7h-1zM501 607h1v4h-1zM502 607h1v4h-1zM503 604h1v7h-1zM504 604h1v10h-1zM505 604h1v10h-1zM506 604h1v10h-1zM507 607h1v7h-1zM508 607h1v4h-1zM509 604h1v7h-1zM510 604h1v7h-1zM511 604h1v7h-1zM512 604h1v10h-1zM513 602h1v12h-1zM514 607h1v7h-1zM515 607h1v7h-1zM516 604h1v7h-1zM517 604h1v7h-1zM518 607h1v7h-1zM519 604h1v10h-1zM520 604h1v7h-1zM521 604h1v7h-1zM522 607h1v4h-1zM523 604h1v10h-1zM524 604h1v7h-1zM525 604h1v7h-1zM526 604h1v10h-1zM527 604h1v10h-1zM528 604h1v10h-1zM529 604h1v10h-1zM530 604h1v10h-1zM531 604h1v7h-1zM532 604h1v7h-1zM533 607h1v7h-1zM534 604h1v10h-1zM535 604h1v7h-1zM536 604h1v7h-1zM537 604h1v7h-1zM538 604h1v7h-1zM539 604h1v10h-1zM540 604h1v10h-1zM541 604h1v7h-1zM542 607h1v4h-1zM543 607h1v4h-1zM544 604h1v7h-1zM545 604h1v10h-1zM546 604h1v7h-1zM547 607h1v4h-1zM548 607h1v4h-1zM549 604h1v10h-1zM550 604h1v7h-1zM551 604h1v10h-1zM552 604h1v10h-1zM553 604h1v10h-1zM554 604h1v10h-1zM555 601h1v10h-1zM556 597h1v11h-1zM557 594h1v10h-1zM558 590h1v11h-1zM559 590h1v10h-1zM560 586h1v11h-1zM561 578h1v15h-1zM562 572h1v13h-1zM563 565h1v14h-1zM564 559h1v13h-1zM565 552h1v14h-1zM566 546h1v13h-1zM567 543h1v10h-1zM568 534h1v16h-1zM569 529h1v15h-1zM570 527h1v9h-1zM571 522h1v9h-1zM572 514h1v15h-1zM573 506h1v15h-1zM574 495h1v18h-1zM575 489h1v13h-1zM576 483h1v13h-1zM577 481h1v12h-1zM578 475h1v10h-1zM579 472h1v10h-1zM580 471h1v9h-1zM581 473h1v15h-1zM582 478h1v12h-1zM583 486h1v8h-1zM584 490h1v7h-1zM585 490h1v11h-1zM586 494h1v12h-1zM587 499h1v9h-1zM588 496h1v9h-1zM589 494h1v9h-1zM590 493h1v8h-1zM591 493h1v11h-1zM592 497h1v11h-1zM593 501h1v11h-1zM594 505h1v11h-1zM595 512h1v7h-1zM596 515h1v10h-1zM597 515h1v13h-1zM598 518h1v13h-1zM599 521h1v13h-1zM600 524h1v11h-1zM601 528h1v10h-1zM602 531h1v13h-1zM603 534h1v14h-1zM604 541h1v10h-1zM605 544h1v10h-1zM606 547h1v10h-1zM607 550h1v7h-1zM608 553h1v7h-1zM609 553h1v12h-1zM610 555h1v13h-1zM611 561h1v7h-1zM612 561h1v13h-1zM613 564h1v9h-1zM614 569h1v6h-1zM615 571h1v9h-1zM616 573h1v9h-1zM617 572h1v12h-1zM618 574h1v13h-1zM619 580h1v8h-1zM620 581h1v6h-1zM621 580h1v8h-1zM622 584h1v6h-1zM623 586h1v8h-1zM624 584h1v8h-1zM625 585h1v8h-1zM626 586h1v8h-1zM627 590h1v8h-1zM628 591h1v8h-1zM629 589h1v8h-1zM630 588h1v9h-1zM631 593h1v5h-1zM632 594h1v4h-1zM633 594h1v8h-1zM634 595h1v5h-1zM635 593h1v7h-1zM636 593h1v8h-1zM637 594h1v7h-1zM638 594h1v11h-1zM639 595h1v10h-1zM640 595h1v11h-1zM641 595h1v11h-1zM642 597h1v5h-1zM643 596h1v5h-1zM644 595h1v5h-1zM645 594h1v5h-1zM646 593h1v5h-1zM647 589h1v8h-1zM648 588h1v8h-1zM649 587h1v11h-1zM650 586h1v11h-1zM651 585h1v11h-1zM652 584h1v11h-1zM653 586h1v8h-1zM654 582h1v8h-1zM655 584h1v5h-1zM656 584h1v5h-1zM657 585h1v5h-1zM658 586h1v4h-1zM659 586h1v8h-1zM660 587h1v8h-1zM661 588h1v8h-1zM662 589h1v7h-1zM663 589h1v5h-1zM664 587h1v8h-1zM665 588h1v11h-1zM666 592h1v7h-1zM667 589h1v11h-1zM668 590h1v11h-1zM669 590h1v10h-1zM670 592h1v5h-1zM671 592h1v4h-1zM672 591h1v5h-1zM673 588h1v7h-1zM674 587h1v8h-1zM675 590h1v7h-1zM676 589h1v8h-1zM677 586h1v7h-1zM678 585h1v11h-1zM679 585h1v10h-1zM680 585h1v8h-1zM681 589h1v4h-1zM682 589h1v4h-1zM683 589h1v5h-1zM684 590h1v7h-1zM685 587h1v8h-1zM686 588h1v10h-1zM687 588h1v10h-1zM688 588h1v8h-1zM689 589h1v7h-1zM690 589h1v11h-1zM691 590h1v10h-1zM692 590h1v7h-1zM693 593h1v5h-1zM694 591h1v7h-1zM695 591h1v8h-1zM696 591h1v8h-1zM697 590h1v11h-1zM698 590h1v7h-1zM699 589h1v11h-1zM700 591h1v8h-1zM701 591h1v7h-1zM702 587h1v11h-1zM703 587h1v10h-1zM704 586h1v11h-1zM705 585h1v11h-1zM706 588h1v7h-1zM707 584h1v11h-1zM708 584h1v7h-1zM709 583h1v8h-1zM710 582h1v8h-1zM711 585h1v4h-1zM712 581h1v8h-1zM713 580h1v8h-1zM714 583h1v4h-1zM715 580h1v10h-1zM716 583h1v5h-1zM717 584h1v4h-1zM718 581h1v11h-1zM719 582h1v11h-1zM720 586h1v5h-1zM721 584h1v7h-1zM722 584h1v11h-1zM723 585h1v11h-1zM724 586h1v11h-1zM725 590h1v8h-1zM726 591h1v4h-1zM727 588h1v7h-1zM728 588h1v7h-1zM729 588h1v8h-1zM730 589h1v10h-1zM731 589h1v7h-1zM732 589h1v10h-1zM733 592h1v8h-1zM734 593h1v7h-1zM735 590h1v7h-1zM736 590h1v11h-1zM737 591h1v10h-1zM738 594h1v5h-1zM739 595h1v7h-1zM740 595h1v5h-1zM741 593h1v10h-1zM742 593h1v8h-1zM743 597h1v7h-1zM744 594h1v11h-1zM745 595h1v10h-1zM746 598h1v7h-1zM747 598h1v8h-1zM748 596h1v10h-1zM749 596h1v7h-1zM750 596h1v7h-1zM751 599h1v8h-1zM752 600h1v7h-1zM753 597h1v10h-1zM754 600h1v7h-1zM755 597h1v11h-1zM756 598h1v7h-1zM757 598h1v7h-1zM758 598h1v7h-1zM759 598h1v8h-1zM760 599h1v7h-1zM761 599h1v7h-1zM762 599h1v7h-1zM763 599h1v11h-1zM764 600h1v10h-1zM765 600h1v10h-1zM766 600h1v10h-1zM767 603h1v4h-1zM768 603h1v4h-1zM769 600h1v7h-1zM770 600h1v10h-1zM771 600h1v11h-1zM772 601h1v10h-1zM773 601h1v10h-1zM774 601h1v7h-1zM775 601h1v10h-1zM776 604h1v7h-1zM777 604h1v7h-1zM778 601h1v11h-1zM779 602h1v10h-1zM780 602h1v10h-1zM781 602h1v10h-1zM782 602h1v10h-1zM783 602h1v10h-1zM784 605h1v4h-1zM785 602h1v8h-1zM786 603h1v10h-1zM787 603h1v7h-1zM788 603h1v7h-1zM789 606h1v7h-1zM790 606h1v7h-1zM791 603h1v10h-1zM792 606h1v4h-1zM793 603h1v7h-1zM794 603h1v10h-1zM795 606h1v7h-1zM796 603h1v7h-1zM797 603h1v7h-1zM798 603h1v10h-1zM799 606h1v7h-1zM800 606h1v7h-1zM801 603h1v7h-1zM802 603h1v7h-1zM803 603h1v7h-1zM804 603h1v10h-1zM805 603h1v7h-1zM806 603h1v7h-1zM807 603h1v7h-1zM808 603h1v7h-1zM809 603h1v10h-1zM810 603h1v10h-1zM811 603h1v10h-1zM812 603h1v8h-1zM813 603h1v8h-1zM814 603h1v7h-1zM815 603h1v7h-1zM816 603h1v10h-1zM817 603h1v10h-1zM818 603h1v7h-1zM819 603h1v10h-1zM820 603h1v7h-1zM821 603h1v7h-1zM822 603h1v7h-1zM823 603h1v7h-1zM824 603h1v7h-1zM825 603h1v7h-1zM826 603h1v10h-1zM827 603h1v10h-1zM828 603h1v7h-1zM829 603h1v10h-1zM830 606h1v7h-1zM831 606h1v4h-1zM832 603h1v7h-1zM833 603h1v10h-1zM834 603h1v10h-1zM835 606h1v4h-1zM836 606h1v4h-1zM837 603h1v7h-1zM838 603h1v7h-1zM839 603h1v10h-1zM840 603h1v10h-1zM841 603h1v10h-1zM842 603h1v10h-1zM843 603h1v7h-1zM844 603h1v10h-1zM845 603h1v10h-1zM846 603h1v7h-1zM847 603h1v7h-1zM848 603h1v7h-1zM849 603h1v10h-1zM850 603h1v10h-1zM851 603h1v10h-1zM852 606h1v7h-1zM853 603h1v10h-1zM854 606h1v4h-1zM855 603h1v7h-1zM856 606h1v7h-1zM857 603h1v7h-1zM858 603h1v7h-1zM859 603h1v7h-1zM860 606h1v4h-1zM861 606h1v4h-1zM862 603h1v7h-1zM863 603h1v7h-1zM864 603h1v10h-1zM865 603h1v7h-1zM866 606h1v4h-1zM867 606h1v4h-1zM868 603h1v7h-1zM869 603h1v10h-1zM870 603h1v10h-1zM871 603h1v7h-1zM872 603h1v7h-1zM873 606h1v7h-1zM874 603h1v10h-1zM875 603h1v10h-1zM876 603h1v10h-1zM877 606h1v7h-1zM878 606h1v7h-1zM879 606h1v7h-1zM880 603h1v10h-1zM881 603h1v10h-1zM882 606h1v4h-1zM883 606h1v4h-1zM884 603h1v7h-1zM885 603h1v7h-1zM886 606h1v7h-1zM887 603h1v10h-1zM888 603h1v10h-1zM889 603h1v7h-1zM890 603h1v7h-1zM891 603h1v10h-1zM892 603h1v7h-1zM893 606h1v4h-1zM894 603h1v7h-1zM895 603h1v7h-1zM896 603h1v7h-1zM897 606h1v7h-1zM898 606h1v7h-1zM899 603h1v7h-1zM900 603h1v7h-1zM901 603h1v7h-1zM902 603h1v10h-1zM903 603h1v10h-1zM904 603h1v7h-1zM905 603h1v7h-1zM906 603h1v7h-1zM907 603h1v7h-1zM908 603h1v7h-1zM909 603h1v10h-1zM910 603h1v10h-1zM911 603h1v7h-1zM912 606h1v4h-1zM913 606h1v4h-1zM914 603h1v7h-1zM915 603h1v8h-1zM916 604h1v10h-1zM917 604h1v10h-1zM918 607h1v7h-1zM919 607h1v7h-1zM920 602h1v12h-1zM921 607h1v8h-1zM922 605h1v7h-1zM923 605h1v7h-1zM924 605h1v10h-1zM925 608h1v7h-1zM926 608h1v7h-1zM927 608h1v7h-1zM928 605h1v7h-1zM929 605h1v7h-1zM930 605h1v7h-1zM931 605h1v7h-1zM932 608h1v7h-1zM933 608h1v7h-1zM934 608h1v7h-1zM935 608h1v7h-1zM936 608h1v4h-1zM937 605h1v10h-1zM938 605h1v7h-1zM939 605h1v7h-1zM940 608h1v7h-1zM941 603h1v12h-1zM942 605h1v10h-1zM943 605h1v10h-1zM944 605h1v7h-1zM945 608h1v7h-1zM946 605h1v10h-1zM947 605h1v10h-1zM948 605h1v10h-1zM949 605h1v10h-1zM950 608h1v4h-1zM951 603h1v9h-1zM952 608h1v7h-1zM953 608h1v4h-1zM954 605h1v7h-1zM955 605h1v7h-1zM956 605h1v10h-1zM957 608h1v7h-1zM958 605h1v10h-1zM959 605h1v10h-1zM960 605h1v10h-1zM961 608h1v7h-1zM962 608h1v4h-1zM963 608h1v4h-1zM964 605h1v10h-1zM965 605h1v10h-1zM966 605h1v10h-1zM967 605h1v7h-1zM968 605h1v7h-1zM969 605h1v10h-1zM970 605h1v7h-1zM971 608h1v4h-1zM972 605h1v7h-1zM973 605h1v10h-1zM974 608h1v7h-1zM975 608h1v4h-1zM976 605h1v7h-1zM977 605h1v7h-1zM978 605h1v7h-1zM979 605h1v10h-1zM980 605h1v10h-1zM981 605h1v10h-1zM982 605h1v10h-1zM983 605h1v7h-1zM984 605h1v7h-1zM985 605h1v7h-1zM986 605h1v10h-1zM987 605h1v10h-1zM988 605h1v10h-1zM989 605h1v10h-1zM990 608h1v7h-1zM991 605h1v7h-1zM992 605h1v7h-1zM993 605h1v7h-1zM994 608h1v4h-1zM995 608h1v4h-1zM996 608h1v4h-1zM997 608h1v4h-1zM998 608h1v4h-1zM999 605h1v10h-1zM1000 605h1v10h-1zM1001 605h1v7h-1zM1002 605h1v7h-1zM1003 605h1v7h-1zM1004 605h1v7h-1zM1005 605h1v7h-1zM1006 608h1v7h-1zM1007 605h1v10h-1zM1008 608h1v4h-1zM1009 605h1v7h-1zM1010 605h1v7h-1zM1011 605h1v10h-1zM1012 608h1v4h-1zM1013 608h1v7h-1zM1014 605h1v7h-1zM1015 605h1v7h-1zM1016 605h1v7h-1zM1017 605h1v7h-1zM1018 605h1v7h-1zM1019 605h1v7h-1zM1020 605h1v7h-1z" fill="#00ffff"/>
<path d="M514 1h3v2h-1v10h1v2h-3z M526 1h3v14h-3v-2h1v-10h-1z" fill="#fff"/>
<path d="M518 1h7l-3.5 4z" fill="#ff9900" shape-rendering="auto"/>
<rect x="517" y="5" width="8" height="11" rx="2" fill="#ff9900" shape-rendering="auto"/>
<path d="M518 6h6v1.6h-2v7h-2v-7h-2z" fill="#000"/>
<path d="M516 17h11.5l-5.75 6z" fill="#ff9900" shape-rendering="auto"/>
<path d="M515 25.5q0-1.5 1.5-1.5h9q1.5 0 1.5 1.5v10l-6 3.6l-6-3.6z" fill="#ff9900" shape-rendering="auto"/>
<path d="M516 25h10v2h-4v9h-2v-9h-4z" fill="#000"/>
<path d="M0.7 73.9h11.9l7.3 7.5l-7.3 7.45h-11.9z" fill="none" stroke="#ff00ff" stroke-width="1.5" shape-rendering="auto"/>
<path d="M0 599h13l7 8l-7 8.8h-13z" fill="#00ffff" shape-rendering="auto"/>
<rect x="20.5" y="670.5" width="553.5" height="20" rx="6" fill="none" shape-rendering="auto" stroke="#e8e8e8" stroke-width="1.15"/>
<rect x="582.5" y="670.5" width="147" height="37" rx="6" fill="none" shape-rendering="auto" stroke="#e8e8e8" stroke-width="1.15"/>
<rect x="737.5" y="670.5" width="106" height="37" rx="6" fill="none" shape-rendering="auto" stroke="#e8e8e8" stroke-width="1.15"/>
<rect x="851.5" y="670.5" width="169.5" height="37.5" rx="6" fill="none" shape-rendering="auto" stroke="#e8e8e8" stroke-width="1.15"/>
<rect x="165" y="673" width="25" height="15.5" rx="7.5" fill="#00ffff" shape-rendering="auto"/>
<rect x="304" y="673" width="25" height="15.5" rx="7.5" fill="#a000b4" shape-rendering="auto"/>
<rect x="882" y="673.5" width="25" height="15" rx="7.5" fill="#ffff00" shape-rendering="auto"/>
<text x="282.8" y="681.6" font-size="10" fill="#00ffff" textLength="5" lengthAdjust="spacingAndGlyphs">B</text><text x="286.8" y="686.3" font-size="9.5" fill="#00ffff" textLength="6.2" lengthAdjust="spacingAndGlyphs">W</text>
<path d="M200.5 675v9.5M197 680.5l3.5 4.5l3.5-4.5" stroke="#00ffff" stroke-width="1.5" fill="none" shape-rendering="auto"/>
<text x="421.8" y="681.6" font-size="10" fill="#a000b4" textLength="5" lengthAdjust="spacingAndGlyphs">B</text><text x="425.8" y="686.3" font-size="9.5" fill="#a000b4" textLength="6.2" lengthAdjust="spacingAndGlyphs">W</text>
<rect x="587.5" y="691" width="10.5" height="12.5" rx="1.5" fill="#ff9900" shape-rendering="auto"/>
<path d="M589 693h7.5v2h-2.75v7h-2v-7h-2.75z" fill="#000"/>
<path d="M599 697.2h7" stroke="#ff9900" stroke-width="1.4" fill="none" shape-rendering="auto"/><path d="M605 693.8l4.5 3.4l-4.5 3.4z" fill="#ff9900" shape-rendering="auto"/>
<path d="M610.5 694h10l-5 6z" fill="#ff9900" shape-rendering="auto"/>
<path d="M920 685h4.5l3.5-9h4" stroke="#fff" stroke-width="1.6" fill="none" shape-rendering="auto"/>
<rect x="20.9" y="714.9" width="112.2" height="52.2" rx="3" fill="#535651" shape-rendering="auto" stroke="#767578" stroke-width="1.8"/>
<rect x="138.9" y="714.9" width="112.2" height="52.2" rx="3" fill="#535651" shape-rendering="auto" stroke="#767578" stroke-width="1.8"/>
<rect x="256.9" y="714.9" width="112.2" height="52.2" rx="3" fill="#535651" shape-rendering="auto" stroke="#767578" stroke-width="1.8"/>
<rect x="374.9" y="714.9" width="112.2" height="52.2" rx="3" fill="#535651" shape-rendering="auto" stroke="#767578" stroke-width="1.8"/>
<rect x="492.9" y="714.9" width="112.2" height="52.2" rx="3" fill="#535651" shape-rendering="auto" stroke="#767578" stroke-width="1.8"/>
<rect x="728.9" y="714.9" width="112.2" height="52.2" rx="3" fill="#535651" shape-rendering="auto" stroke="#767578" stroke-width="1.8"/>
<rect x="56" y="742" width="42" height="16" fill="#096cfa"/>
<rect x="300" y="742" width="26" height="16" fill="#096cfa"/>
<rect x="521" y="742" width="56" height="16" fill="#096cfa"/>
<rect x="754" y="733" width="62" height="16" fill="#096cfa"/>
<rect x="182.5" y="742" width="25.5" height="16" rx="8" fill="#ffff00" shape-rendering="auto"/>
<path d="M894.6 675.3h2.2v10.2h-2.2v-7.4l-2.4 1.3v-2.1z" fill="#000" shape-rendering="auto"/>
<path d="M196 744.3h2.2v10h-2.2v-7.3l-2.4 1.3v-2.1z" fill="#000" shape-rendering="auto"/>
<rect x="377.6" y="735.6" width="31" height="31" rx="3" fill="#096cfa" stroke="#d0d8e8" stroke-width="1.2" shape-rendering="auto"/>
<path d="M381 761.2h7.8l8.5-18.7h7.6" stroke="#fff" stroke-width="1.3" fill="none" shape-rendering="auto"/>
<path d="M419 742.5h7l9.5 18.7h7.5" stroke="#fff" stroke-width="1.3" fill="none" shape-rendering="auto"/>
<path d="M457 742.5h7.5l8 18.7h8.5M457 761.2h7.5l8-18.7h8.5" stroke="#fff" stroke-width="1.3" fill="none" shape-rendering="auto"/>
<rect x="909.5" y="729.5" width="112" height="36" rx="5" fill="none" shape-rendering="auto" stroke="#e8e8e8" stroke-width="1.15"/>
<text x="0.0" y="15" font-size="20.5" fill="#fff" textLength="31.0" lengthAdjust="spacing" style='font-family:"Liberation Serif", serif' stroke="#fff" stroke-width="0.5">Tek</text>
<text x="35.0" y="13" font-size="15.5" fill="#fff" textLength="30.0" lengthAdjust="spacing" stroke="#fff" stroke-width="0.12">Run</text>
<text x="925.0" y="13" font-size="16" fill="#fff" textLength="39.0" lengthAdjust="spacing" stroke="#fff" stroke-width="0.12">Trig?</text>
<text x="207.45" y="686" font-size="16" fill="#00ffff" textLength="74.0" lengthAdjust="spacing" stroke="#00ffff" stroke-width="0.12">20.0mVΩ</text>
<text x="345.75" y="686" font-size="16" fill="#a000b4" textLength="74.6" lengthAdjust="spacing" stroke="#a000b4" stroke-width="0.12">5.00mVΩ</text>
<text x="177.7" y="686" font-size="14.5" fill="#000" font-weight="bold" text-anchor="middle">2</text>
<text x="316.55" y="686" font-size="14.5" fill="#000" font-weight="bold" text-anchor="middle">3</text>
<text x="588.9" y="686" font-size="15" fill="#fff" textLength="53.2" lengthAdjust="spacing" stroke="#fff" stroke-width="0.12">1.00µs</text>
<text x="621.95" y="702.5" font-size="15.5" fill="#ff9900" textLength="87.7" lengthAdjust="spacing" stroke="#ff9900" stroke-width="0.12">0.000000 s</text>
<text x="743.4" y="686" font-size="15.5" fill="#fff" textLength="71.2" lengthAdjust="spacing" stroke="#fff" stroke-width="0.12">2.50GS/s</text>
<text x="743.15" y="703" font-size="15.5" fill="#fff" textLength="79.8" lengthAdjust="spacing" stroke="#fff" stroke-width="0.12">1M points</text>
<text x="965.25" y="686" font-size="15.5" fill="#fff" textLength="49.1" lengthAdjust="spacing" stroke="#fff" stroke-width="0.12">3.60 V</text>
<text x="56.7" y="738" font-size="16" fill="#fff" textLength="39.5" lengthAdjust="spacing" stroke="#fff" stroke-width="0.12">Type</text>
<text x="58.85" y="755" font-size="15.5" fill="#fff" textLength="36.2" lengthAdjust="spacing" stroke="#fff" stroke-width="0.12">Edge</text>
<text x="168.05" y="738" font-size="16" fill="#fff" textLength="54.0" lengthAdjust="spacing" stroke="#fff" stroke-width="0.12">Source</text>
<text x="277.05" y="738" font-size="16" fill="#fff" textLength="73.0" lengthAdjust="spacing" stroke="#fff" stroke-width="0.12">Coupling</text>
<text x="302.85" y="755" font-size="15.5" fill="#fff" textLength="21.0" lengthAdjust="spacing" stroke="#fff" stroke-width="0.12">DC</text>
<text x="408.9" y="730" font-size="16" fill="#fff" textLength="43.8" lengthAdjust="spacing" stroke="#fff" stroke-width="0.12">Slope</text>
<text x="529.75" y="738" font-size="16" fill="#fff" textLength="41.1" lengthAdjust="spacing" stroke="#fff" stroke-width="0.12">Level</text>
<text x="524.35" y="755" font-size="15.5" fill="#fff" textLength="49.4" lengthAdjust="spacing" stroke="#fff" stroke-width="0.12">3.60 V</text>
<text x="763.1" y="729" font-size="16" fill="#fff" textLength="42.9" lengthAdjust="spacing" stroke="#fff" stroke-width="0.12">Mode</text>
<text x="755.7" y="745.5" font-size="15.5" fill="#fff" textLength="58.5" lengthAdjust="spacing" stroke="#fff" stroke-width="0.12">Normal</text>
<text x="747.05" y="763" font-size="16" fill="#fff" textLength="76.3" lengthAdjust="spacing" stroke="#fff" stroke-width="0.12">&amp; Holdoff</text>
<text x="925.05" y="746" font-size="15.5" fill="#fff" textLength="91.6" lengthAdjust="spacing" stroke="#fff" stroke-width="0.12">7 Jun 2023</text>
<text x="915.4" y="762" font-size="15.5" fill="#fff" textLength="69.7" lengthAdjust="spacing" stroke="#fff" stroke-width="0.12">11:07:07</text>
<text x="7.6" y="613" font-size="15" fill="#000" font-weight="bold" text-anchor="middle">2</text>
<text x="7.35" y="87" font-size="15" fill="#a000b4" stroke="#a000b4" stroke-width="0.12" text-anchor="middle">3</text>
</svg>
</body></html>
